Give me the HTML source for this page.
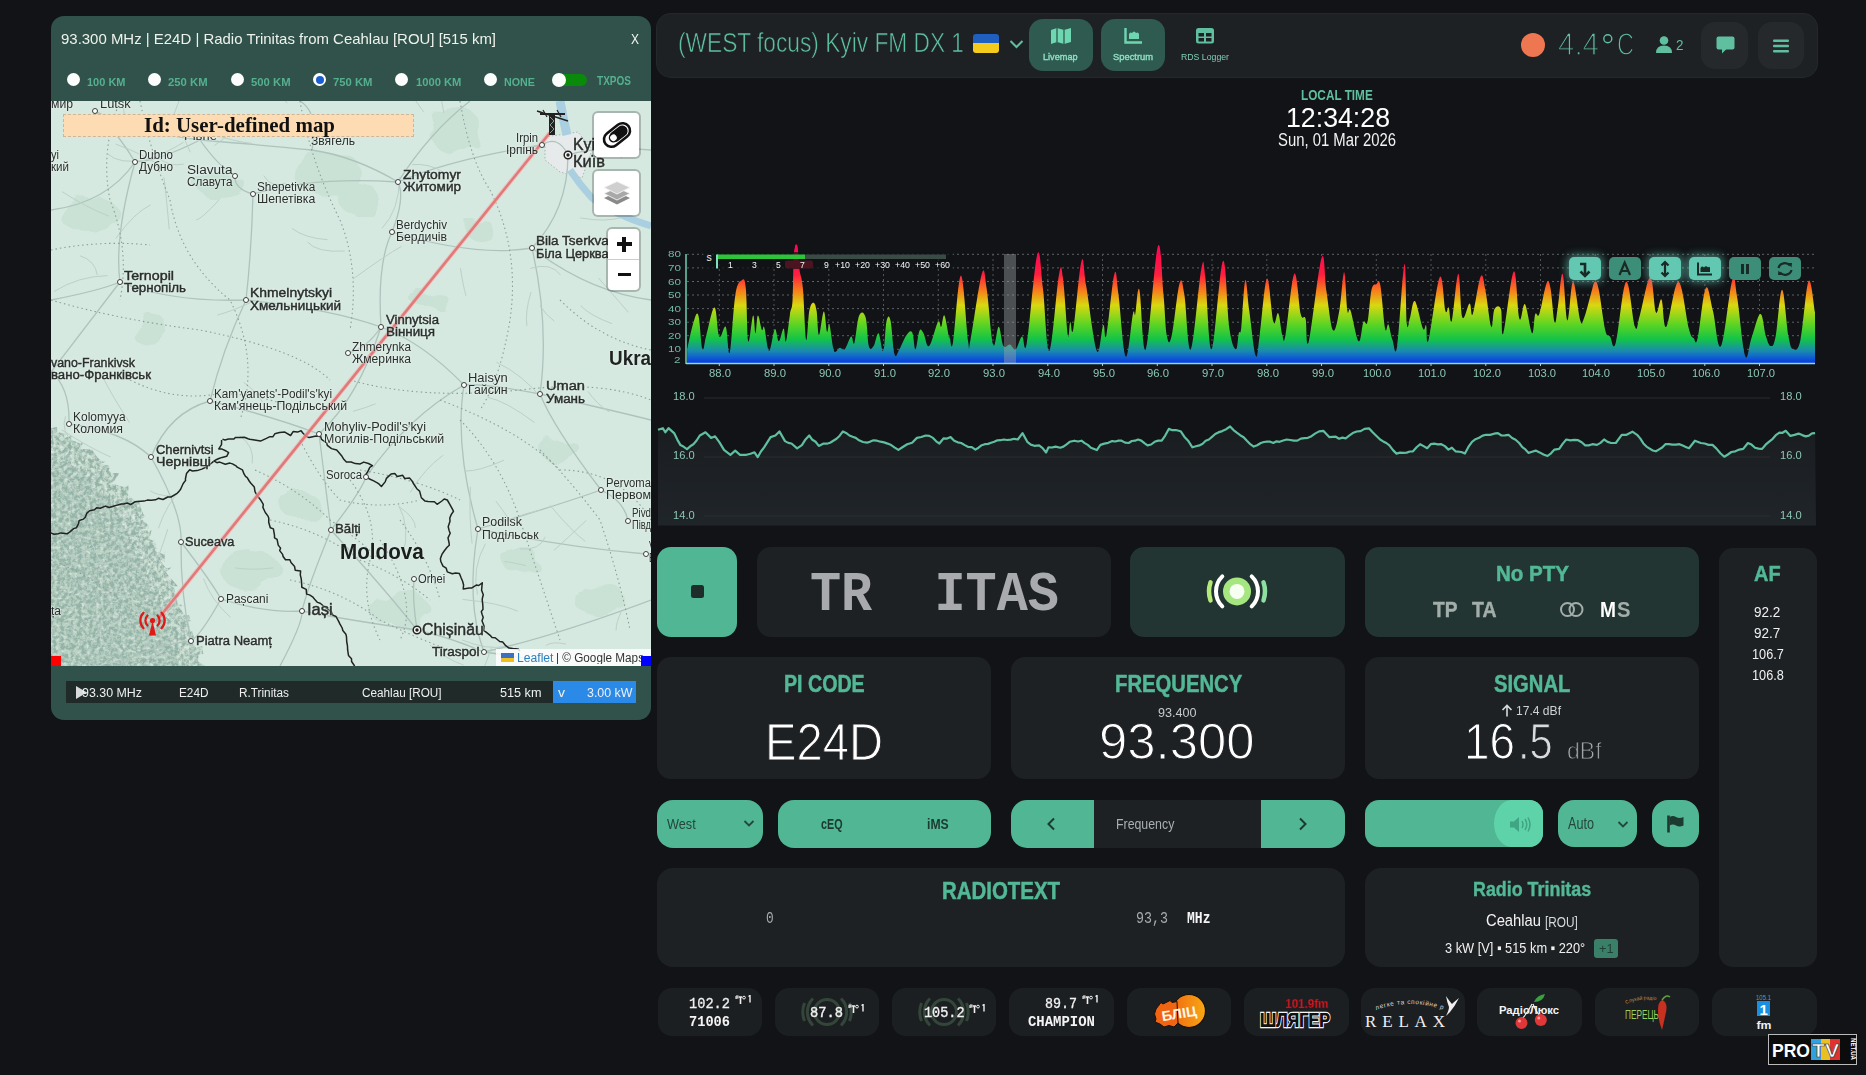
<!DOCTYPE html>
<html><head><meta charset="utf-8"><title>FM-DX Webserver</title>
<style>
html,body{margin:0;padding:0;width:1866px;height:1075px;overflow:hidden;background:#111316;}
body{position:relative;font-family:"Liberation Sans",sans-serif;}
.b{position:absolute;}
.t{position:absolute;white-space:pre;transform-origin:0 0;}
</style></head><body>
<div class="b" style="left:657.0px;top:13.5px;width:1159.5px;height:63.0px;background:#1e2124;border-radius:14px;box-shadow:0 0 0 1px #24282b;"></div>
<span id="hdr_title" class="t" style="left:677.50px;top:30.23px;font-size:26.89px;line-height:26.89px;color:#5fbf9f;font-weight:400;font-family:'Liberation Sans', sans-serif;transform:scaleX(0.8449);-webkit-text-stroke:0.60px #1e2124;">(WEST focus) Kyiv FM DX 1</span>
<div class="b" style="left:972.5px;top:33.5px;width:26.5px;height:9.7px;background:#1f5fbf;border-radius:3px 3px 0 0;"></div>
<div class="b" style="left:972.5px;top:43.2px;width:26.5px;height:9.8px;background:#f2cb1d;border-radius:0 0 3px 3px;"></div>
<svg class="b" style="left:1009px;top:39px" width="15" height="10"><path d="M1.5 2 L7.5 8 L13.5 2" stroke="#5fbf9f" stroke-width="2" fill="none"/></svg>
<div class="b" style="left:1029.0px;top:18.8px;width:64.0px;height:52.0px;background:#2e5a4f;border-radius:14px;"></div>
<div class="b" style="left:1101.0px;top:18.8px;width:64.0px;height:52.0px;background:#2e5a4f;border-radius:14px;"></div>
<svg class="b" style="left:1050px;top:28px" width="22" height="16"><path d="M1 2 L7 0 L14 2 L21 0 L21 14 L14 16 L7 14 L1 16 Z" fill="#6fd6b2"/><path d="M7 0 L7 14 M14 2 L14 16" stroke="#2e5a4f" stroke-width="1.3"/></svg>
<svg class="b" style="left:1124px;top:28px" width="19" height="16"><path d="M1.5 0 L1.5 14.5 L18 14.5" stroke="#6fd6b2" stroke-width="2.4" fill="none"/><path d="M5 11 L5 6 Q6 3.5 8 5 Q10 2 12 5 Q14 3.5 15 6 L15 11 Z" fill="#6fd6b2"/></svg>
<svg class="b" style="left:1196px;top:28px" width="18" height="16"><rect x="0" y="0" width="18" height="15.5" rx="2.5" fill="#5fbf9f"/><rect x="2.5" y="5" width="5.5" height="3.5" fill="#1e2124"/><rect x="10" y="5" width="5.5" height="3.5" fill="#1e2124"/><rect x="2.5" y="10" width="5.5" height="3.5" fill="#1e2124"/><rect x="10" y="10" width="5.5" height="3.5" fill="#1e2124"/></svg>
<span id="lbl_live" class="t" style="left:1043.30px;top:51.63px;font-size:9.88px;line-height:9.88px;color:#8fe0c4;font-weight:400;font-family:'Liberation Sans', sans-serif;transform:scaleX(0.9269);-webkit-text-stroke:0.35px #8fe0c4;">Livemap</span>
<span id="lbl_spec" class="t" style="left:1113.00px;top:51.63px;font-size:9.88px;line-height:9.88px;color:#8fe0c4;font-weight:400;font-family:'Liberation Sans', sans-serif;transform:scaleX(0.9464);-webkit-text-stroke:0.35px #8fe0c4;">Spectrum</span>
<span id="lbl_rds" class="t" style="left:1180.70px;top:51.63px;font-size:9.88px;line-height:9.88px;color:#7fcfb4;font-weight:400;font-family:'Liberation Sans', sans-serif;transform:scaleX(0.8833);">RDS Logger</span>
<div class="b" style="left:1521.2px;top:33.2px;width:24px;height:24px;border-radius:50%;background:#ee7650"></div>
<span id="temp" class="t" style="left:1557.50px;top:29.04px;font-size:31.25px;line-height:31.25px;color:#5fbf9f;font-weight:400;font-family:'Liberation Sans', sans-serif;transform:scaleX(0.9435);-webkit-text-stroke:1.30px #1e2124;">4.4</span>
<svg class="b" style="left:1602px;top:33px" width="12" height="12"><circle cx="5.8" cy="5.8" r="4" stroke="#5fbf9f" stroke-width="1.4" fill="none"/></svg>
<span id="tempc" class="t" style="left:1616.50px;top:29.04px;font-size:31.25px;line-height:31.25px;color:#5fbf9f;font-weight:400;font-family:'Liberation Sans', sans-serif;transform:scaleX(0.7529);-webkit-text-stroke:1.30px #1e2124;">C</span>
<svg class="b" style="left:1656px;top:36px" width="16" height="18"><circle cx="8" cy="4.5" r="4.3" fill="#5fbf9f"/><path d="M0 17 Q0 9.5 8 9.5 Q16 9.5 16 17 Z" fill="#5fbf9f"/></svg>
<span id="users" class="t" style="left:1675.50px;top:38.69px;font-size:13.95px;line-height:13.95px;color:#5fbf9f;font-weight:400;font-family:'Liberation Sans', sans-serif;transform:scaleX(0.9658);">2</span>
<div class="b" style="left:1701.0px;top:21.5px;width:47.4px;height:47.3px;background:#25292c;border-radius:14px;"></div>
<div class="b" style="left:1757.5px;top:21.5px;width:46.5px;height:47.3px;background:#25292c;border-radius:14px;"></div>
<svg class="b" style="left:1716px;top:36px" width="19" height="18"><rect x="0.5" y="0.5" width="18" height="13" rx="2" fill="#5fbf9f"/><path d="M6 13 L6 17.5 L10.5 13 Z" fill="#5fbf9f"/></svg>
<svg class="b" style="left:1773px;top:38.5px" width="16" height="14"><rect x="0" y="0.5" width="16" height="2.6" rx="1" fill="#5fbf9f"/><rect x="0" y="5.7" width="16" height="2.6" rx="1" fill="#5fbf9f"/><rect x="0" y="10.9" width="16" height="2.6" rx="1" fill="#5fbf9f"/></svg>
<span id="lt" class="t" style="left:1301.00px;top:87.69px;font-size:14.53px;line-height:14.53px;color:#5fbf9f;font-weight:700;font-family:'Liberation Sans', sans-serif;transform:scaleX(0.8119);">LOCAL TIME</span>
<span id="time" class="t" style="left:1285.60px;top:103.00px;font-size:28.34px;line-height:28.34px;color:#ffffff;font-weight:400;font-family:'Liberation Sans', sans-serif;transform:scaleX(0.9430);">12:34:28</span>
<span id="date" class="t" style="left:1278.00px;top:130.90px;font-size:18.90px;line-height:18.90px;color:#f2f2f2;font-weight:400;font-family:'Liberation Sans', sans-serif;transform:scaleX(0.7857);">Sun, 01 Mar 2026</span>
<svg class="b" style="left:0;top:0" width="1866" height="540">
<defs><linearGradient id="sg" x1="0" y1="254" x2="0" y2="363" gradientUnits="userSpaceOnUse"><stop offset="0" stop-color="#ff0a50"/><stop offset="0.19" stop-color="#ff1e40"/><stop offset="0.33" stop-color="#f87a1c"/><stop offset="0.47" stop-color="#d8d810"/><stop offset="0.65" stop-color="#5ad424"/><stop offset="0.78" stop-color="#14c448"/><stop offset="0.89" stop-color="#1a8ab0"/><stop offset="1" stop-color="#0838e8"/></linearGradient><linearGradient id="fillg" x1="0" y1="420" x2="0" y2="526" gradientUnits="userSpaceOnUse"><stop offset="0" stop-color="#1a1d20"/><stop offset="1" stop-color="#22272a"/></linearGradient><filter id="glow" x="-50%" y="-50%" width="200%" height="200%"><feGaussianBlur stdDeviation="3"/></filter></defs>
<line x1="687" y1="254.3" x2="1815" y2="254.3" stroke="#5e6264" stroke-width="1" stroke-dasharray="2 3"/>
<line x1="687" y1="267.9" x2="1815" y2="267.9" stroke="#5e6264" stroke-width="1" stroke-dasharray="2 3"/>
<line x1="687" y1="281.5" x2="1815" y2="281.5" stroke="#5e6264" stroke-width="1" stroke-dasharray="2 3"/>
<line x1="687" y1="295.0" x2="1815" y2="295.0" stroke="#5e6264" stroke-width="1" stroke-dasharray="2 3"/>
<line x1="687" y1="308.6" x2="1815" y2="308.6" stroke="#5e6264" stroke-width="1" stroke-dasharray="2 3"/>
<line x1="687" y1="322.2" x2="1815" y2="322.2" stroke="#5e6264" stroke-width="1" stroke-dasharray="2 3"/>
<line x1="687" y1="335.7" x2="1815" y2="335.7" stroke="#5e6264" stroke-width="1" stroke-dasharray="2 3"/>
<line x1="687" y1="349.3" x2="1815" y2="349.3" stroke="#5e6264" stroke-width="1" stroke-dasharray="2 3"/>
<line x1="719.3" y1="254" x2="719.3" y2="364" stroke="#505456" stroke-width="1" stroke-dasharray="2 3"/>
<line x1="774.0" y1="254" x2="774.0" y2="364" stroke="#505456" stroke-width="1" stroke-dasharray="2 3"/>
<line x1="828.8" y1="254" x2="828.8" y2="364" stroke="#505456" stroke-width="1" stroke-dasharray="2 3"/>
<line x1="883.5" y1="254" x2="883.5" y2="364" stroke="#505456" stroke-width="1" stroke-dasharray="2 3"/>
<line x1="938.3" y1="254" x2="938.3" y2="364" stroke="#505456" stroke-width="1" stroke-dasharray="2 3"/>
<line x1="993.0" y1="254" x2="993.0" y2="364" stroke="#505456" stroke-width="1" stroke-dasharray="2 3"/>
<line x1="1047.8" y1="254" x2="1047.8" y2="364" stroke="#505456" stroke-width="1" stroke-dasharray="2 3"/>
<line x1="1102.5" y1="254" x2="1102.5" y2="364" stroke="#505456" stroke-width="1" stroke-dasharray="2 3"/>
<line x1="1157.3" y1="254" x2="1157.3" y2="364" stroke="#505456" stroke-width="1" stroke-dasharray="2 3"/>
<line x1="1212.0" y1="254" x2="1212.0" y2="364" stroke="#505456" stroke-width="1" stroke-dasharray="2 3"/>
<line x1="1266.8" y1="254" x2="1266.8" y2="364" stroke="#505456" stroke-width="1" stroke-dasharray="2 3"/>
<line x1="1321.5" y1="254" x2="1321.5" y2="364" stroke="#505456" stroke-width="1" stroke-dasharray="2 3"/>
<line x1="1376.3" y1="254" x2="1376.3" y2="364" stroke="#505456" stroke-width="1" stroke-dasharray="2 3"/>
<line x1="1431.0" y1="254" x2="1431.0" y2="364" stroke="#505456" stroke-width="1" stroke-dasharray="2 3"/>
<line x1="1485.8" y1="254" x2="1485.8" y2="364" stroke="#505456" stroke-width="1" stroke-dasharray="2 3"/>
<line x1="1540.5" y1="254" x2="1540.5" y2="364" stroke="#505456" stroke-width="1" stroke-dasharray="2 3"/>
<line x1="1595.3" y1="254" x2="1595.3" y2="364" stroke="#505456" stroke-width="1" stroke-dasharray="2 3"/>
<line x1="1650.0" y1="254" x2="1650.0" y2="364" stroke="#505456" stroke-width="1" stroke-dasharray="2 3"/>
<line x1="1704.8" y1="254" x2="1704.8" y2="364" stroke="#505456" stroke-width="1" stroke-dasharray="2 3"/>
<line x1="1759.5" y1="254" x2="1759.5" y2="364" stroke="#505456" stroke-width="1" stroke-dasharray="2 3"/>
<path d="M687,363 L687.2,349.3 C688.3,344.3 691.5,328.2 693.6,322.0 C695.6,315.8 696.8,310.6 698.4,315.6 C700.0,320.6 701.0,345.8 702.4,349.3 C703.9,352.9 704.2,342.5 706.4,334.9 C708.7,327.2 712.1,307.2 714.5,307.5 C716.8,307.8 717.2,332.9 719.3,336.5 C721.4,340.0 723.8,323.9 725.7,326.8 C727.7,329.8 728.0,358.4 729.8,352.5 C731.5,346.6 733.2,307.9 735.4,294.7 C737.6,281.4 739.9,281.4 741.8,280.2 C743.7,279.0 744.7,277.0 745.8,288.2 C747.0,299.4 746.9,336.3 748.2,341.3 C749.6,346.3 751.7,317.0 753.1,315.6 C754.4,314.1 754.6,333.2 755.5,333.2 C756.4,333.2 756.7,316.2 757.9,315.6 C759.1,315.0 760.7,327.8 761.9,330.0 C763.1,332.2 763.0,323.8 764.3,327.6 C765.7,331.5 767.2,350.6 769.1,350.9 C771.1,351.2 773.0,331.0 774.8,329.2 C776.5,327.5 777.2,341.4 778.8,341.3 C780.4,341.1 782.3,328.4 783.6,328.4 C784.9,328.4 784.8,343.9 786.0,341.3 C787.2,338.6 788.9,321.3 790.0,314.0 C791.2,306.6 791.8,311.1 792.5,301.1 C793.1,291.1 793.1,269.2 793.6,259.3 C794.0,249.4 794.4,249.9 794.9,247.2 C795.3,244.5 795.6,244.4 796.2,244.5 C796.7,244.6 797.2,243.6 797.8,248.0 C798.4,252.5 798.4,261.6 799.4,268.9 C800.3,276.3 801.7,275.3 802.9,288.2 C804.1,301.2 804.9,335.6 806.1,339.7 C807.3,343.8 808.0,317.5 809.3,310.7 C810.7,304.0 812.0,302.7 813.4,302.7 C814.7,302.7 815.5,304.8 816.6,310.7 C817.6,316.6 817.7,334.7 819.0,334.9 C820.3,335.0 822.3,312.1 823.8,311.5 C825.3,311.0 826.0,329.3 827.0,331.6 C828.1,334.0 828.3,321.2 829.4,324.4 C830.6,327.6 832.1,344.5 833.5,349.3 C834.8,354.2 835.5,351.2 836.7,350.9 C837.9,350.6 838.4,348.0 839.9,347.7 C841.4,347.4 842.6,351.4 844.7,349.3 C846.8,347.3 849.4,337.6 851.1,336.5 C852.9,335.3 852.9,346.7 854.4,342.9 C855.8,339.1 857.1,320.3 859.2,315.6 C861.2,310.8 863.8,311.6 865.6,317.2 C867.4,322.8 867.4,340.8 868.8,346.1 C870.3,351.4 871.9,348.5 873.6,346.1 C875.4,343.8 876.7,332.4 878.5,333.2 C880.2,334.1 881.8,353.1 883.3,350.9 C884.8,348.7 885.2,326.8 886.5,321.2 C887.8,315.6 889.1,314.3 890.5,320.4 C892.0,326.4 892.9,348.8 894.5,354.1 C896.2,359.5 897.2,352.9 899.4,349.3 C901.6,345.8 904.2,338.0 906.6,334.9 C909.0,331.8 910.6,329.8 912.2,332.4 C913.9,335.1 914.1,349.6 915.5,349.3 C916.8,349.0 918.0,333.8 919.5,330.8 C920.9,327.9 921.7,330.4 923.5,333.2 C925.3,336.0 926.5,348.2 929.1,346.1 C931.8,344.0 935.7,325.5 938.0,322.0 C940.2,318.5 940.0,328.0 941.2,326.8 C942.4,325.6 942.9,313.5 944.4,315.6 C945.9,317.6 948.2,334.5 949.2,338.1 C950.2,341.6 949.0,334.0 949.6,334.9 C950.3,335.7 950.8,353.8 952.9,342.9 C954.9,332.0 958.1,275.7 960.9,275.4 C963.7,275.1 966.4,329.5 968.1,341.3 C969.9,353.1 968.0,352.1 970.5,339.7 C973.1,327.3 978.9,283.2 981.8,273.8 C984.7,264.3 984.6,275.3 986.6,288.2 C988.7,301.2 990.8,337.4 993.1,344.5 C995.3,351.6 996.8,326.5 998.7,326.8 C1000.6,327.1 1001.4,342.9 1003.5,346.1 C1005.6,349.4 1007.7,343.9 1009.9,344.5 C1012.1,345.1 1013.4,350.8 1015.6,349.3 C1017.8,347.9 1019.9,337.6 1022.0,336.5 C1024.1,335.3 1024.0,357.9 1026.8,342.9 C1029.6,327.9 1034.3,264.5 1037.3,254.5 C1040.2,244.4 1040.7,270.5 1042.9,288.2 C1045.1,305.9 1046.4,353.4 1049.3,350.9 C1052.3,348.4 1056.5,287.8 1059.0,274.6 C1061.5,261.3 1061.4,267.5 1063.0,278.6 C1064.6,289.6 1066.5,326.9 1067.8,334.9 C1069.1,342.8 1069.2,323.2 1070.2,322.0 C1071.3,320.8 1071.4,339.6 1073.4,328.4 C1075.5,317.2 1079.1,268.6 1081.5,260.9 C1083.8,253.2 1083.5,270.1 1086.3,286.6 C1089.1,303.1 1093.7,343.9 1096.8,350.9 C1099.8,358.0 1101.4,328.2 1103.2,325.2 C1105.0,322.3 1104.3,344.3 1106.4,334.9 C1108.5,325.4 1112.2,281.1 1114.4,273.8 C1116.6,266.4 1116.4,279.5 1118.5,294.7 C1120.5,309.8 1123.0,353.0 1125.7,356.6 C1128.3,360.1 1131.2,321.8 1132.9,314.0 C1134.7,306.1 1134.2,318.4 1135.3,314.0 C1136.5,309.5 1137.4,283.4 1139.4,289.8 C1141.3,296.3 1142.4,357.3 1145.8,349.3 C1149.2,341.4 1154.6,256.5 1157.8,246.4 C1161.1,236.4 1161.9,278.5 1163.5,294.7 C1165.1,310.9 1165.2,327.2 1166.7,334.9 C1168.2,342.5 1169.2,345.9 1171.5,336.5 C1173.9,327.0 1177.2,291.1 1179.5,283.4 C1181.9,275.7 1182.3,282.6 1184.4,294.7 C1186.4,306.7 1187.7,354.0 1190.8,349.3 C1193.9,344.6 1198.6,282.2 1201.3,268.9 C1203.9,255.7 1203.4,262.2 1205.3,277.0 C1207.2,291.7 1208.5,352.3 1211.7,349.3 C1214.9,346.4 1219.7,264.7 1223.0,260.9 C1226.2,257.1 1227.0,312.2 1229.4,328.4 C1231.7,344.6 1234.1,348.4 1235.8,349.3 C1237.6,350.2 1237.8,337.2 1238.8,333.2 C1239.8,329.3 1240.1,337.3 1241.3,327.6 C1242.4,317.9 1243.8,283.3 1245.3,280.2 C1246.7,277.1 1247.4,296.9 1249.3,310.7 C1251.2,324.6 1253.8,351.3 1255.7,355.8 C1257.6,360.2 1257.7,349.0 1259.7,334.9 C1261.8,320.7 1264.5,280.9 1267.0,278.6 C1269.5,276.2 1271.3,315.7 1273.4,322.0 C1275.5,328.3 1276.6,310.8 1278.2,313.2 C1279.9,315.5 1280.9,330.9 1282.3,334.9 C1283.6,338.8 1283.3,346.1 1285.5,334.9 C1287.7,323.7 1291.5,277.6 1294.3,273.8 C1297.1,269.9 1298.7,305.7 1300.7,314.0 C1302.8,322.2 1304.1,313.8 1305.6,318.8 C1307.0,323.8 1305.8,352.5 1308.8,341.3 C1311.7,330.1 1318.4,266.8 1321.6,257.7 C1324.9,248.5 1324.4,278.2 1326.5,291.4 C1328.5,304.7 1330.5,326.5 1332.9,330.0 C1335.3,333.6 1337.3,321.4 1339.3,310.7 C1341.4,300.1 1342.7,272.2 1344.1,272.2 C1345.6,272.2 1346.2,303.7 1347.4,310.7 C1348.5,317.8 1348.5,305.1 1350.6,310.7 C1352.6,316.3 1356.3,339.2 1358.6,341.3 C1361.0,343.3 1361.8,325.5 1363.4,322.0 C1365.1,318.5 1366.0,327.9 1367.5,322.0 C1368.9,316.1 1369.9,296.8 1371.5,289.8 C1373.1,282.9 1374.7,285.1 1376.3,284.2 C1377.9,283.3 1378.7,276.9 1380.3,285.0 C1381.9,293.1 1383.7,321.2 1385.1,328.4 C1386.6,335.6 1387.0,322.3 1388.4,324.4 C1389.7,326.5 1390.8,335.7 1392.4,339.7 C1394.0,343.7 1395.0,360.0 1397.2,346.1 C1399.4,332.3 1402.7,268.2 1404.4,264.1 C1406.2,260.0 1405.8,313.9 1406.8,323.6 C1407.9,333.3 1408.6,321.3 1410.1,317.2 C1411.5,313.0 1412.5,299.0 1414.9,301.1 C1417.2,303.2 1420.9,324.0 1422.9,328.4 C1425.0,332.8 1425.1,323.1 1426.1,325.2 C1427.2,327.3 1426.0,348.5 1428.6,339.7 C1431.1,330.8 1436.7,282.3 1439.8,277.0 C1442.9,271.7 1443.8,305.1 1445.4,310.7 C1447.1,316.3 1447.5,305.8 1448.6,307.5 C1449.8,309.3 1450.1,326.6 1451.9,320.4 C1453.6,314.2 1456.4,274.4 1458.3,273.8 C1460.2,273.2 1460.3,311.7 1462.3,317.2 C1464.4,322.6 1467.6,304.1 1469.5,303.5 C1471.5,302.9 1470.7,319.0 1472.8,314.0 C1474.8,308.9 1478.4,280.3 1480.8,276.2 C1483.2,272.0 1483.7,282.2 1485.6,291.4 C1487.5,300.7 1489.6,323.6 1491.3,326.8 C1492.9,330.1 1492.7,312.4 1494.5,309.1 C1496.2,305.9 1499.3,304.7 1500.9,309.1 C1502.5,313.6 1501.0,340.2 1503.3,333.2 C1505.7,326.3 1510.8,274.0 1513.8,271.4 C1516.7,268.7 1517.3,312.7 1519.4,318.8 C1521.5,324.8 1522.7,301.7 1525.0,304.3 C1527.3,307.0 1530.2,331.5 1532.1,333.2 C1533.9,335.0 1533.9,317.5 1535.3,314.0 C1536.6,310.4 1537.2,319.6 1539.3,314.0 C1541.4,308.4 1544.5,288.1 1546.5,283.4 C1548.6,278.7 1549.1,281.2 1550.5,288.2 C1552.0,295.3 1553.2,318.5 1554.6,322.0 C1555.9,325.5 1556.3,316.4 1557.8,307.5 C1559.3,298.7 1560.8,271.4 1562.6,273.8 C1564.4,276.1 1565.5,318.9 1567.4,320.4 C1569.3,321.9 1570.7,281.8 1573.1,281.8 C1575.4,281.8 1578.2,313.9 1580.3,320.4 C1582.4,326.9 1582.4,321.9 1584.3,317.2 C1586.2,312.5 1588.8,301.1 1590.7,294.7 C1592.7,288.2 1593.3,282.7 1594.8,281.8 C1596.2,280.9 1596.9,281.0 1598.8,289.8 C1600.7,298.7 1603.1,321.5 1605.2,330.0 C1607.3,338.6 1608.1,334.1 1610.0,336.5 C1611.9,338.8 1612.7,352.9 1615.7,342.9 C1618.6,332.9 1622.6,284.7 1626.1,281.8 C1629.6,278.9 1632.4,320.6 1635.0,326.8 C1637.5,333.0 1637.0,324.7 1639.8,315.6 C1642.6,306.4 1647.3,277.6 1650.2,277.0 C1653.2,276.4 1653.8,308.2 1655.9,312.3 C1657.9,316.5 1659.6,296.8 1661.5,299.5 C1663.4,302.1 1663.2,330.1 1666.3,326.8 C1669.4,323.6 1674.2,281.5 1678.4,281.8 C1682.5,282.1 1686.0,318.1 1688.8,328.4 C1691.6,338.7 1692.0,336.3 1693.6,338.1 C1695.3,339.8 1695.4,347.2 1697.7,338.1 C1699.9,328.9 1702.9,293.2 1705.7,288.2 C1708.5,283.2 1710.1,300.1 1712.9,310.7 C1715.7,321.4 1717.4,351.7 1721.0,346.1 C1724.5,340.5 1729.3,289.3 1732.2,280.2 C1735.2,271.1 1734.7,282.4 1737.0,296.3 C1739.4,310.1 1742.4,348.1 1745.1,355.8 C1747.7,363.4 1748.7,345.7 1751.5,338.1 C1754.3,330.4 1757.7,314.2 1760.4,314.0 C1763.0,313.7 1764.1,330.6 1766.0,336.5 C1767.9,342.4 1769.0,346.1 1770.8,346.1 C1772.6,346.1 1773.6,346.8 1775.6,336.5 C1777.7,326.1 1779.7,289.8 1782.1,289.8 C1784.4,289.8 1786.4,325.6 1788.5,336.5 C1790.6,347.4 1791.1,348.7 1793.3,349.3 C1795.5,349.9 1797.7,352.2 1800.5,339.7 C1803.3,327.2 1805.9,286.0 1808.6,281.0 C1811.2,276.0 1813.8,306.6 1815.0,312.3 L1815,363 Z" fill="url(#sg)"/>
<rect x="1004" y="254" width="12" height="109" fill="#a0a4a8" fill-opacity="0.42"/>
<line x1="686" y1="254" x2="686" y2="364" stroke="#6fcfb0" stroke-width="1.5"/>
<line x1="686" y1="363.5" x2="1815" y2="363.5" stroke="#7fe0e8" stroke-width="1.6"/>
<line x1="719.3" y1="363" x2="719.3" y2="366" stroke="#9fd8d0" stroke-width="1"/>
<line x1="774.0" y1="363" x2="774.0" y2="366" stroke="#9fd8d0" stroke-width="1"/>
<line x1="828.8" y1="363" x2="828.8" y2="366" stroke="#9fd8d0" stroke-width="1"/>
<line x1="883.5" y1="363" x2="883.5" y2="366" stroke="#9fd8d0" stroke-width="1"/>
<line x1="938.3" y1="363" x2="938.3" y2="366" stroke="#9fd8d0" stroke-width="1"/>
<line x1="993.0" y1="363" x2="993.0" y2="366" stroke="#9fd8d0" stroke-width="1"/>
<line x1="1047.8" y1="363" x2="1047.8" y2="366" stroke="#9fd8d0" stroke-width="1"/>
<line x1="1102.5" y1="363" x2="1102.5" y2="366" stroke="#9fd8d0" stroke-width="1"/>
<line x1="1157.3" y1="363" x2="1157.3" y2="366" stroke="#9fd8d0" stroke-width="1"/>
<line x1="1212.0" y1="363" x2="1212.0" y2="366" stroke="#9fd8d0" stroke-width="1"/>
<line x1="1266.8" y1="363" x2="1266.8" y2="366" stroke="#9fd8d0" stroke-width="1"/>
<line x1="1321.5" y1="363" x2="1321.5" y2="366" stroke="#9fd8d0" stroke-width="1"/>
<line x1="1376.3" y1="363" x2="1376.3" y2="366" stroke="#9fd8d0" stroke-width="1"/>
<line x1="1431.0" y1="363" x2="1431.0" y2="366" stroke="#9fd8d0" stroke-width="1"/>
<line x1="1485.8" y1="363" x2="1485.8" y2="366" stroke="#9fd8d0" stroke-width="1"/>
<line x1="1540.5" y1="363" x2="1540.5" y2="366" stroke="#9fd8d0" stroke-width="1"/>
<line x1="1595.3" y1="363" x2="1595.3" y2="366" stroke="#9fd8d0" stroke-width="1"/>
<line x1="1650.0" y1="363" x2="1650.0" y2="366" stroke="#9fd8d0" stroke-width="1"/>
<line x1="1704.8" y1="363" x2="1704.8" y2="366" stroke="#9fd8d0" stroke-width="1"/>
<line x1="1759.5" y1="363" x2="1759.5" y2="366" stroke="#9fd8d0" stroke-width="1"/>
<rect x="703" y="252" width="250" height="17" fill="#111316" fill-opacity="0.72"/>
<rect x="785" y="260.5" width="28" height="8" fill="#4a1420" rx="2"/>
<rect x="717" y="254.5" width="88" height="4.5" fill="#2ec43a"/>
<rect x="805" y="254.5" width="141" height="4.5" fill="#3a4a44"/>
<rect x="716" y="254.5" width="2" height="14" fill="#7fe0c0"/>
</svg>
<span id="smeter_s" class="t" style="left:706.50px;top:251.61px;font-size:10.50px;line-height:10.50px;color:#f0f0f0;font-weight:400;font-family:'Liberation Sans', sans-serif;">s</span>
<span id="sm0" class="t" style="left:727.50px;top:259.75px;font-size:9.74px;line-height:9.74px;color:#f4f4f4;font-weight:400;font-family:'Liberation Sans', sans-serif;transform:scaleX(0.8853);">1</span>
<span id="sm1" class="t" style="left:751.50px;top:259.75px;font-size:9.74px;line-height:9.74px;color:#f4f4f4;font-weight:400;font-family:'Liberation Sans', sans-serif;transform:scaleX(0.8853);">3</span>
<span id="sm2" class="t" style="left:775.50px;top:259.75px;font-size:9.74px;line-height:9.74px;color:#f4f4f4;font-weight:400;font-family:'Liberation Sans', sans-serif;transform:scaleX(0.8853);">5</span>
<span id="sm3" class="t" style="left:799.50px;top:259.75px;font-size:9.74px;line-height:9.74px;color:#f4f4f4;font-weight:400;font-family:'Liberation Sans', sans-serif;transform:scaleX(0.8853);">7</span>
<span id="sm4" class="t" style="left:823.50px;top:259.75px;font-size:9.74px;line-height:9.74px;color:#f4f4f4;font-weight:400;font-family:'Liberation Sans', sans-serif;transform:scaleX(0.8853);">9</span>
<span id="sm5" class="t" style="left:835.00px;top:259.75px;font-size:9.74px;line-height:9.74px;color:#f4f4f4;font-weight:400;font-family:'Liberation Sans', sans-serif;transform:scaleX(0.9082);">+10</span>
<span id="sm6" class="t" style="left:855.00px;top:259.75px;font-size:9.74px;line-height:9.74px;color:#f4f4f4;font-weight:400;font-family:'Liberation Sans', sans-serif;transform:scaleX(0.9082);">+20</span>
<span id="sm7" class="t" style="left:875.00px;top:259.75px;font-size:9.74px;line-height:9.74px;color:#f4f4f4;font-weight:400;font-family:'Liberation Sans', sans-serif;transform:scaleX(0.9082);">+30</span>
<span id="sm8" class="t" style="left:895.00px;top:259.75px;font-size:9.74px;line-height:9.74px;color:#f4f4f4;font-weight:400;font-family:'Liberation Sans', sans-serif;transform:scaleX(0.9082);">+40</span>
<span id="sm9" class="t" style="left:915.00px;top:259.75px;font-size:9.74px;line-height:9.74px;color:#f4f4f4;font-weight:400;font-family:'Liberation Sans', sans-serif;transform:scaleX(0.9082);">+50</span>
<span id="sm10" class="t" style="left:935.00px;top:259.75px;font-size:9.74px;line-height:9.74px;color:#f4f4f4;font-weight:400;font-family:'Liberation Sans', sans-serif;transform:scaleX(0.9082);">+60</span>
<span id="yl80" class="t" style="left:667.50px;top:249.44px;font-size:9.88px;line-height:9.88px;color:#72b9a2;font-weight:400;font-family:'Liberation Sans', sans-serif;transform:scaleX(1.1835);">80</span>
<span id="yl70" class="t" style="left:667.50px;top:263.01px;font-size:9.88px;line-height:9.88px;color:#72b9a2;font-weight:400;font-family:'Liberation Sans', sans-serif;transform:scaleX(1.1835);">70</span>
<span id="yl60" class="t" style="left:667.50px;top:276.58px;font-size:9.88px;line-height:9.88px;color:#72b9a2;font-weight:400;font-family:'Liberation Sans', sans-serif;transform:scaleX(1.1835);">60</span>
<span id="yl50" class="t" style="left:667.50px;top:290.15px;font-size:9.88px;line-height:9.88px;color:#72b9a2;font-weight:400;font-family:'Liberation Sans', sans-serif;transform:scaleX(1.1835);">50</span>
<span id="yl40" class="t" style="left:667.50px;top:303.72px;font-size:9.88px;line-height:9.88px;color:#72b9a2;font-weight:400;font-family:'Liberation Sans', sans-serif;transform:scaleX(1.1835);">40</span>
<span id="yl30" class="t" style="left:667.50px;top:317.29px;font-size:9.88px;line-height:9.88px;color:#72b9a2;font-weight:400;font-family:'Liberation Sans', sans-serif;transform:scaleX(1.1835);">30</span>
<span id="yl20" class="t" style="left:667.50px;top:330.86px;font-size:9.88px;line-height:9.88px;color:#72b9a2;font-weight:400;font-family:'Liberation Sans', sans-serif;transform:scaleX(1.1835);">20</span>
<span id="yl10" class="t" style="left:667.50px;top:344.43px;font-size:9.88px;line-height:9.88px;color:#72b9a2;font-weight:400;font-family:'Liberation Sans', sans-serif;transform:scaleX(1.1835);">10</span>
<span id="yl2" class="t" style="left:674.00px;top:355.13px;font-size:9.88px;line-height:9.88px;color:#72b9a2;font-weight:400;font-family:'Liberation Sans', sans-serif;transform:scaleX(1.1818);">2</span>
<span id="xl88" class="t" style="left:709.30px;top:368.94px;font-size:10.47px;line-height:10.47px;color:#8cc7b3;font-weight:400;font-family:'Liberation Sans', sans-serif;transform:scaleX(1.0789);">88.0</span>
<span id="xl89" class="t" style="left:764.05px;top:368.94px;font-size:10.47px;line-height:10.47px;color:#8cc7b3;font-weight:400;font-family:'Liberation Sans', sans-serif;transform:scaleX(1.0789);">89.0</span>
<span id="xl90" class="t" style="left:818.80px;top:368.94px;font-size:10.47px;line-height:10.47px;color:#8cc7b3;font-weight:400;font-family:'Liberation Sans', sans-serif;transform:scaleX(1.0789);">90.0</span>
<span id="xl91" class="t" style="left:873.55px;top:368.94px;font-size:10.47px;line-height:10.47px;color:#8cc7b3;font-weight:400;font-family:'Liberation Sans', sans-serif;transform:scaleX(1.0789);">91.0</span>
<span id="xl92" class="t" style="left:928.30px;top:368.94px;font-size:10.47px;line-height:10.47px;color:#8cc7b3;font-weight:400;font-family:'Liberation Sans', sans-serif;transform:scaleX(1.0789);">92.0</span>
<span id="xl93" class="t" style="left:983.05px;top:368.94px;font-size:10.47px;line-height:10.47px;color:#8cc7b3;font-weight:400;font-family:'Liberation Sans', sans-serif;transform:scaleX(1.0789);">93.0</span>
<span id="xl94" class="t" style="left:1037.80px;top:368.94px;font-size:10.47px;line-height:10.47px;color:#8cc7b3;font-weight:400;font-family:'Liberation Sans', sans-serif;transform:scaleX(1.0789);">94.0</span>
<span id="xl95" class="t" style="left:1092.55px;top:368.94px;font-size:10.47px;line-height:10.47px;color:#8cc7b3;font-weight:400;font-family:'Liberation Sans', sans-serif;transform:scaleX(1.0789);">95.0</span>
<span id="xl96" class="t" style="left:1147.30px;top:368.94px;font-size:10.47px;line-height:10.47px;color:#8cc7b3;font-weight:400;font-family:'Liberation Sans', sans-serif;transform:scaleX(1.0789);">96.0</span>
<span id="xl97" class="t" style="left:1202.05px;top:368.94px;font-size:10.47px;line-height:10.47px;color:#8cc7b3;font-weight:400;font-family:'Liberation Sans', sans-serif;transform:scaleX(1.0789);">97.0</span>
<span id="xl98" class="t" style="left:1256.80px;top:368.94px;font-size:10.47px;line-height:10.47px;color:#8cc7b3;font-weight:400;font-family:'Liberation Sans', sans-serif;transform:scaleX(1.0789);">98.0</span>
<span id="xl99" class="t" style="left:1311.55px;top:368.94px;font-size:10.47px;line-height:10.47px;color:#8cc7b3;font-weight:400;font-family:'Liberation Sans', sans-serif;transform:scaleX(1.0789);">99.0</span>
<span id="xl100" class="t" style="left:1363.30px;top:368.94px;font-size:10.47px;line-height:10.47px;color:#8cc7b3;font-weight:400;font-family:'Liberation Sans', sans-serif;transform:scaleX(1.0686);">100.0</span>
<span id="xl101" class="t" style="left:1418.05px;top:368.94px;font-size:10.47px;line-height:10.47px;color:#8cc7b3;font-weight:400;font-family:'Liberation Sans', sans-serif;transform:scaleX(1.0686);">101.0</span>
<span id="xl102" class="t" style="left:1472.80px;top:368.94px;font-size:10.47px;line-height:10.47px;color:#8cc7b3;font-weight:400;font-family:'Liberation Sans', sans-serif;transform:scaleX(1.0686);">102.0</span>
<span id="xl103" class="t" style="left:1527.55px;top:368.94px;font-size:10.47px;line-height:10.47px;color:#8cc7b3;font-weight:400;font-family:'Liberation Sans', sans-serif;transform:scaleX(1.0686);">103.0</span>
<span id="xl104" class="t" style="left:1582.30px;top:368.94px;font-size:10.47px;line-height:10.47px;color:#8cc7b3;font-weight:400;font-family:'Liberation Sans', sans-serif;transform:scaleX(1.0686);">104.0</span>
<span id="xl105" class="t" style="left:1637.05px;top:368.94px;font-size:10.47px;line-height:10.47px;color:#8cc7b3;font-weight:400;font-family:'Liberation Sans', sans-serif;transform:scaleX(1.0686);">105.0</span>
<span id="xl106" class="t" style="left:1691.80px;top:368.94px;font-size:10.47px;line-height:10.47px;color:#8cc7b3;font-weight:400;font-family:'Liberation Sans', sans-serif;transform:scaleX(1.0686);">106.0</span>
<span id="xl107" class="t" style="left:1746.55px;top:368.94px;font-size:10.47px;line-height:10.47px;color:#8cc7b3;font-weight:400;font-family:'Liberation Sans', sans-serif;transform:scaleX(1.0686);">107.0</span>
<div class="b" style="left:1569.0px;top:257.3px;width:31.5px;height:23.0px;background:#62c8b2;border-radius:5px;box-shadow:0 0 8px 2px rgba(110,220,200,0.55);"></div>
<div class="b" style="left:1609.0px;top:257.3px;width:31.5px;height:23.0px;background:#3d8e78;border-radius:5px;"></div>
<div class="b" style="left:1649.0px;top:257.3px;width:31.5px;height:23.0px;background:#62c8b2;border-radius:5px;box-shadow:0 0 8px 2px rgba(110,220,200,0.55);"></div>
<div class="b" style="left:1689.0px;top:257.3px;width:31.5px;height:23.0px;background:#62c8b2;border-radius:5px;box-shadow:0 0 8px 2px rgba(110,220,200,0.55);"></div>
<div class="b" style="left:1729.0px;top:257.3px;width:31.5px;height:23.0px;background:#3d8e78;border-radius:5px;"></div>
<div class="b" style="left:1769.0px;top:257.3px;width:31.5px;height:23.0px;background:#3d8e78;border-radius:5px;"></div>
<svg class="b" style="left:1569px;top:257px" width="32" height="24"><path d="M11 7 L16 7 L16 17" stroke="#1a2a26" stroke-width="2.6" fill="none"/><path d="M11.5 14.5 L16 19 L20.5 14.5" stroke="#1a2a26" stroke-width="2.6" fill="none"/></svg>
<svg class="b" style="left:1609px;top:257px" width="32" height="24"><path d="M10.5 18 L15.7 5.5 L21 18 M12.5 14 L19 14" stroke="#1a2a26" stroke-width="2.2" fill="none"/></svg>
<svg class="b" style="left:1649px;top:257px" width="32" height="24"><path d="M16 5 L16 19 M12.5 8.5 L16 5 L19.5 8.5 M12.5 15.5 L16 19 L19.5 15.5" stroke="#1a2a26" stroke-width="2.2" fill="none"/></svg>
<svg class="b" style="left:1689px;top:257px" width="32" height="24"><path d="M9 5.5 L9 17.5 L23 17.5" stroke="#1a2a26" stroke-width="2" fill="none"/><path d="M11.5 15 L11.5 11 Q13 8.5 15 10.5 Q17 8 19 10.5 Q20.5 9 21 11 L21 15 Z" fill="#1a2a26"/></svg>
<svg class="b" style="left:1729px;top:257px" width="32" height="24"><rect x="12" y="7" width="3" height="10" fill="#1a2a26"/><rect x="17" y="7" width="3" height="10" fill="#1a2a26"/></svg>
<svg class="b" style="left:1769px;top:257px" width="32" height="24"><path d="M9.5 11 A6.5 6 0 0 1 21 8.5 M22.5 13 A6.5 6 0 0 1 11 15.5" stroke="#1a2a26" stroke-width="2.2" fill="none"/><path d="M19 6 L23 6 L22.5 10.5 Z M13 18 L9 18 L9.5 13.5 Z" fill="#1a2a26"/></svg>
<svg class="b" style="left:0;top:0" width="1866" height="540">
<defs><linearGradient id="fg2" x1="0" y1="425" x2="0" y2="526" gradientUnits="userSpaceOnUse"><stop offset="0" stop-color="#1a1d20"/><stop offset="1" stop-color="#20252a"/></linearGradient></defs>
<path d="M658,525.5 L658.0,429.8 L662.9,428.2 L665.3,432.3 L668.5,428.2 L674.1,433.1 L677.3,439.6 L680.5,445.1 L683.8,446.8 L687.0,449.1 L690.2,446.3 L693.4,444.3 L696.6,440.5 L699.8,435.5 L705.5,432.3 L711.1,437.9 L715.1,436.3 L719.5,442.4 L724.0,449.9 L727.2,452.3 L730.4,454.8 L735.2,450.7 L740.0,454.8 L743.2,454.9 L746.5,454.8 L750.5,453.8 L754.5,452.3 L757.7,457.2 L760.9,451.5 L764.1,447.4 L767.4,442.1 L770.6,437.1 L775.4,435.5 L779.4,431.4 L785.0,441.1 L788.3,442.9 L791.5,443.5 L797.1,448.3 L801.9,445.1 L805.5,439.4 L809.2,435.5 L812.4,439.8 L815.6,441.8 L818.8,445.9 L823.6,443.5 L826.8,443.7 L830.1,442.7 L833.3,440.7 L836.5,438.7 L839.7,435.7 L842.9,431.4 L846.1,432.9 L849.4,435.5 L852.6,436.8 L855.8,437.9 L859.0,440.3 L863.0,442.0 L867.0,442.7 L870.3,441.6 L873.5,440.3 L877.0,440.7 L880.5,441.7 L884.1,442.4 L887.6,443.6 L891.2,445.1 L894.8,447.6 L898.4,449.9 L902.8,447.0 L907.2,444.3 L912.1,442.7 L916.9,437.9 L921.3,437.0 L925.7,435.5 L929.3,435.9 L933.0,437.9 L936.2,441.3 L939.4,443.5 L942.6,439.5 L943.5,438.3 L947.1,438.6 L950.6,437.1 L954.2,440.7 L957.7,442.3 L961.2,443.0 L964.8,445.1 L968.3,447.0 L971.8,447.2 L975.4,449.6 L978.5,447.7 L981.7,445.2 L984.8,444.2 L988.0,443.9 L991.1,442.7 L994.2,441.8 L997.4,440.3 L1000.5,440.2 L1003.7,439.5 L1007.2,440.0 L1010.8,439.6 L1014.3,438.8 L1017.8,439.5 L1022.5,433.1 L1027.3,441.8 L1030.8,444.6 L1034.3,445.8 L1039.1,445.4 L1042.6,448.1 L1046.1,452.5 L1048.5,447.3 L1052.0,447.5 L1055.6,446.6 L1060.3,447.7 L1063.4,446.6 L1066.6,444.3 L1069.7,441.8 L1074.4,440.7 L1078.0,441.5 L1081.5,440.7 L1084.7,443.1 L1087.8,444.9 L1090.9,447.7 L1096.8,450.1 L1100.4,444.9 L1104.3,443.6 L1108.2,442.8 L1112.2,441.1 L1115.3,441.5 L1118.5,440.6 L1121.6,440.7 L1125.1,442.6 L1128.7,443.0 L1131.8,441.0 L1135.0,440.7 L1138.1,439.5 L1141.3,440.6 L1144.4,443.2 L1147.5,445.4 L1151.1,444.5 L1154.6,441.8 L1158.2,440.6 L1161.7,440.7 L1165.2,435.6 L1168.8,428.9 L1172.3,430.2 L1175.8,430.0 L1180.6,431.2 L1184.5,436.9 L1188.4,441.1 L1192.4,447.3 L1195.9,446.3 L1199.4,445.4 L1202.6,443.8 L1205.7,440.7 L1208.9,439.5 L1212.0,436.8 L1215.2,434.0 L1218.3,432.4 L1222.2,431.1 L1226.2,429.2 L1230.1,426.5 L1233.5,430.1 L1236.8,432.7 L1240.2,435.2 L1243.6,437.2 L1246.9,440.8 L1250.3,444.2 L1253.7,446.6 L1257.2,445.2 L1260.8,443.0 L1263.9,442.0 L1267.0,441.7 L1270.2,441.7 L1273.3,443.0 L1276.5,441.3 L1279.6,441.8 L1283.2,440.5 L1286.7,439.5 L1290.2,440.0 L1293.8,440.7 L1297.3,440.6 L1300.8,438.6 L1304.4,438.1 L1307.9,437.8 L1311.5,436.2 L1315.0,433.6 L1319.1,431.4 L1323.3,430.8 L1329.2,437.1 L1332.5,436.8 L1335.8,436.7 L1339.1,438.7 L1342.4,437.6 L1345.7,438.3 L1349.2,435.7 L1352.7,433.1 L1356.7,431.5 L1360.6,431.1 L1364.5,428.9 L1369.2,428.4 L1372.9,432.5 L1376.5,436.0 L1380.1,439.5 L1383.2,441.4 L1386.3,443.0 L1389.4,445.4 L1393.0,450.1 L1396.5,453.6 L1400.0,452.6 L1403.6,452.9 L1406.7,452.6 L1409.9,451.5 L1413.0,451.3 L1416.6,447.3 L1420.1,444.2 L1423.6,446.1 L1427.2,448.2 L1430.7,444.2 L1434.2,443.6 L1437.8,444.4 L1441.3,444.2 L1444.9,446.1 L1448.4,449.6 L1451.9,447.7 L1455.5,451.3 L1461.4,452.0 L1464.9,453.6 L1468.4,446.9 L1472.0,441.8 L1475.5,439.2 L1479.1,437.8 L1482.6,435.6 L1486.1,434.8 L1490.1,434.9 L1494.0,433.7 L1497.9,433.1 L1501.5,435.5 L1505.0,435.4 L1508.5,434.8 L1512.1,438.0 L1515.6,439.7 L1519.2,443.0 L1522.3,447.1 L1525.4,449.4 L1528.6,452.9 L1532.1,451.7 L1535.7,450.6 L1539.6,452.4 L1543.5,454.5 L1547.5,456.0 L1551.0,453.3 L1554.5,449.6 L1559.2,448.9 L1562.8,443.6 L1566.3,439.5 L1570.3,440.3 L1574.2,439.8 L1578.1,440.2 L1581.7,442.3 L1585.2,445.4 L1588.7,445.4 L1592.3,444.2 L1597.0,444.9 L1600.5,442.9 L1604.1,439.5 L1607.6,441.9 L1611.1,443.0 L1615.8,443.0 L1621.7,434.8 L1626.5,434.8 L1632.4,431.7 L1637.1,434.8 L1640.2,438.4 L1643.4,443.4 L1646.5,446.6 L1649.7,448.6 L1652.8,450.5 L1655.9,451.3 L1659.1,449.4 L1662.2,447.5 L1665.4,444.2 L1668.9,444.2 L1672.5,444.6 L1676.0,444.7 L1679.5,444.2 L1682.7,445.6 L1685.8,446.9 L1689.0,448.2 L1694.9,440.7 L1700.8,443.0 L1704.7,443.5 L1708.6,444.9 L1712.5,444.9 L1716.5,448.6 L1720.4,453.2 L1724.3,456.7 L1727.9,454.5 L1731.4,452.0 L1735.3,451.3 L1739.3,449.6 L1743.2,448.9 L1747.9,443.0 L1751.5,444.6 L1755.0,447.7 L1758.5,448.6 L1762.1,448.9 L1765.6,444.7 L1769.2,441.6 L1772.7,438.8 L1776.2,434.8 L1779.4,432.6 L1782.5,432.8 L1785.7,430.8 L1790.4,435.9 L1794.5,434.9 L1798.6,433.6 L1802.2,435.1 L1805.7,436.4 L1808.9,435.6 L1812.0,433.4 L1815.1,433.1 L1816,525.5 Z" fill="url(#fg2)"/>
<line x1="704" y1="398" x2="1770" y2="398" stroke="#2a2e31" stroke-width="1"/>
<line x1="704" y1="457" x2="1770" y2="457" stroke="#2a2e31" stroke-width="1"/>
<line x1="704" y1="516" x2="1770" y2="516" stroke="#2a2e31" stroke-width="1"/>
<path d="M658.0,429.8 L662.9,428.2 L665.3,432.3 L668.5,428.2 L674.1,433.1 L677.3,439.6 L680.5,445.1 L683.8,446.8 L687.0,449.1 L690.2,446.3 L693.4,444.3 L696.6,440.5 L699.8,435.5 L705.5,432.3 L711.1,437.9 L715.1,436.3 L719.5,442.4 L724.0,449.9 L727.2,452.3 L730.4,454.8 L735.2,450.7 L740.0,454.8 L743.2,454.9 L746.5,454.8 L750.5,453.8 L754.5,452.3 L757.7,457.2 L760.9,451.5 L764.1,447.4 L767.4,442.1 L770.6,437.1 L775.4,435.5 L779.4,431.4 L785.0,441.1 L788.3,442.9 L791.5,443.5 L797.1,448.3 L801.9,445.1 L805.5,439.4 L809.2,435.5 L812.4,439.8 L815.6,441.8 L818.8,445.9 L823.6,443.5 L826.8,443.7 L830.1,442.7 L833.3,440.7 L836.5,438.7 L839.7,435.7 L842.9,431.4 L846.1,432.9 L849.4,435.5 L852.6,436.8 L855.8,437.9 L859.0,440.3 L863.0,442.0 L867.0,442.7 L870.3,441.6 L873.5,440.3 L877.0,440.7 L880.5,441.7 L884.1,442.4 L887.6,443.6 L891.2,445.1 L894.8,447.6 L898.4,449.9 L902.8,447.0 L907.2,444.3 L912.1,442.7 L916.9,437.9 L921.3,437.0 L925.7,435.5 L929.3,435.9 L933.0,437.9 L936.2,441.3 L939.4,443.5 L942.6,439.5 L943.5,438.3 L947.1,438.6 L950.6,437.1 L954.2,440.7 L957.7,442.3 L961.2,443.0 L964.8,445.1 L968.3,447.0 L971.8,447.2 L975.4,449.6 L978.5,447.7 L981.7,445.2 L984.8,444.2 L988.0,443.9 L991.1,442.7 L994.2,441.8 L997.4,440.3 L1000.5,440.2 L1003.7,439.5 L1007.2,440.0 L1010.8,439.6 L1014.3,438.8 L1017.8,439.5 L1022.5,433.1 L1027.3,441.8 L1030.8,444.6 L1034.3,445.8 L1039.1,445.4 L1042.6,448.1 L1046.1,452.5 L1048.5,447.3 L1052.0,447.5 L1055.6,446.6 L1060.3,447.7 L1063.4,446.6 L1066.6,444.3 L1069.7,441.8 L1074.4,440.7 L1078.0,441.5 L1081.5,440.7 L1084.7,443.1 L1087.8,444.9 L1090.9,447.7 L1096.8,450.1 L1100.4,444.9 L1104.3,443.6 L1108.2,442.8 L1112.2,441.1 L1115.3,441.5 L1118.5,440.6 L1121.6,440.7 L1125.1,442.6 L1128.7,443.0 L1131.8,441.0 L1135.0,440.7 L1138.1,439.5 L1141.3,440.6 L1144.4,443.2 L1147.5,445.4 L1151.1,444.5 L1154.6,441.8 L1158.2,440.6 L1161.7,440.7 L1165.2,435.6 L1168.8,428.9 L1172.3,430.2 L1175.8,430.0 L1180.6,431.2 L1184.5,436.9 L1188.4,441.1 L1192.4,447.3 L1195.9,446.3 L1199.4,445.4 L1202.6,443.8 L1205.7,440.7 L1208.9,439.5 L1212.0,436.8 L1215.2,434.0 L1218.3,432.4 L1222.2,431.1 L1226.2,429.2 L1230.1,426.5 L1233.5,430.1 L1236.8,432.7 L1240.2,435.2 L1243.6,437.2 L1246.9,440.8 L1250.3,444.2 L1253.7,446.6 L1257.2,445.2 L1260.8,443.0 L1263.9,442.0 L1267.0,441.7 L1270.2,441.7 L1273.3,443.0 L1276.5,441.3 L1279.6,441.8 L1283.2,440.5 L1286.7,439.5 L1290.2,440.0 L1293.8,440.7 L1297.3,440.6 L1300.8,438.6 L1304.4,438.1 L1307.9,437.8 L1311.5,436.2 L1315.0,433.6 L1319.1,431.4 L1323.3,430.8 L1329.2,437.1 L1332.5,436.8 L1335.8,436.7 L1339.1,438.7 L1342.4,437.6 L1345.7,438.3 L1349.2,435.7 L1352.7,433.1 L1356.7,431.5 L1360.6,431.1 L1364.5,428.9 L1369.2,428.4 L1372.9,432.5 L1376.5,436.0 L1380.1,439.5 L1383.2,441.4 L1386.3,443.0 L1389.4,445.4 L1393.0,450.1 L1396.5,453.6 L1400.0,452.6 L1403.6,452.9 L1406.7,452.6 L1409.9,451.5 L1413.0,451.3 L1416.6,447.3 L1420.1,444.2 L1423.6,446.1 L1427.2,448.2 L1430.7,444.2 L1434.2,443.6 L1437.8,444.4 L1441.3,444.2 L1444.9,446.1 L1448.4,449.6 L1451.9,447.7 L1455.5,451.3 L1461.4,452.0 L1464.9,453.6 L1468.4,446.9 L1472.0,441.8 L1475.5,439.2 L1479.1,437.8 L1482.6,435.6 L1486.1,434.8 L1490.1,434.9 L1494.0,433.7 L1497.9,433.1 L1501.5,435.5 L1505.0,435.4 L1508.5,434.8 L1512.1,438.0 L1515.6,439.7 L1519.2,443.0 L1522.3,447.1 L1525.4,449.4 L1528.6,452.9 L1532.1,451.7 L1535.7,450.6 L1539.6,452.4 L1543.5,454.5 L1547.5,456.0 L1551.0,453.3 L1554.5,449.6 L1559.2,448.9 L1562.8,443.6 L1566.3,439.5 L1570.3,440.3 L1574.2,439.8 L1578.1,440.2 L1581.7,442.3 L1585.2,445.4 L1588.7,445.4 L1592.3,444.2 L1597.0,444.9 L1600.5,442.9 L1604.1,439.5 L1607.6,441.9 L1611.1,443.0 L1615.8,443.0 L1621.7,434.8 L1626.5,434.8 L1632.4,431.7 L1637.1,434.8 L1640.2,438.4 L1643.4,443.4 L1646.5,446.6 L1649.7,448.6 L1652.8,450.5 L1655.9,451.3 L1659.1,449.4 L1662.2,447.5 L1665.4,444.2 L1668.9,444.2 L1672.5,444.6 L1676.0,444.7 L1679.5,444.2 L1682.7,445.6 L1685.8,446.9 L1689.0,448.2 L1694.9,440.7 L1700.8,443.0 L1704.7,443.5 L1708.6,444.9 L1712.5,444.9 L1716.5,448.6 L1720.4,453.2 L1724.3,456.7 L1727.9,454.5 L1731.4,452.0 L1735.3,451.3 L1739.3,449.6 L1743.2,448.9 L1747.9,443.0 L1751.5,444.6 L1755.0,447.7 L1758.5,448.6 L1762.1,448.9 L1765.6,444.7 L1769.2,441.6 L1772.7,438.8 L1776.2,434.8 L1779.4,432.6 L1782.5,432.8 L1785.7,430.8 L1790.4,435.9 L1794.5,434.9 L1798.6,433.6 L1802.2,435.1 L1805.7,436.4 L1808.9,435.6 L1812.0,433.4 L1815.1,433.1" stroke="#5fbf9f" stroke-width="2.2" fill="none" stroke-linejoin="round"/>
</svg>
<span id="sgl18.0" class="t" style="left:673.30px;top:392.14px;font-size:10.47px;line-height:10.47px;color:#8cc7b3;font-weight:400;font-family:'Liberation Sans', sans-serif;transform:scaleX(1.0642);">18.0</span>
<span id="sgr18.0" class="t" style="left:1779.70px;top:392.14px;font-size:10.47px;line-height:10.47px;color:#8cc7b3;font-weight:400;font-family:'Liberation Sans', sans-serif;transform:scaleX(1.0642);">18.0</span>
<span id="sgl16.0" class="t" style="left:673.30px;top:451.14px;font-size:10.47px;line-height:10.47px;color:#8cc7b3;font-weight:400;font-family:'Liberation Sans', sans-serif;transform:scaleX(1.0642);">16.0</span>
<span id="sgr16.0" class="t" style="left:1779.70px;top:451.14px;font-size:10.47px;line-height:10.47px;color:#8cc7b3;font-weight:400;font-family:'Liberation Sans', sans-serif;transform:scaleX(1.0642);">16.0</span>
<span id="sgl14.0" class="t" style="left:673.30px;top:510.64px;font-size:10.47px;line-height:10.47px;color:#8cc7b3;font-weight:400;font-family:'Liberation Sans', sans-serif;transform:scaleX(1.0642);">14.0</span>
<span id="sgr14.0" class="t" style="left:1779.70px;top:510.64px;font-size:10.47px;line-height:10.47px;color:#8cc7b3;font-weight:400;font-family:'Liberation Sans', sans-serif;transform:scaleX(1.0642);">14.0</span>
<div class="b" style="left:657.0px;top:547.0px;width:80.0px;height:90.0px;background:#50b693;border-radius:14px;"></div>
<div class="b" style="left:691.0px;top:585.0px;width:12.5px;height:13.0px;background:#1e2d29;border-radius:2.5px;"></div>
<div class="b" style="left:757.0px;top:547.0px;width:354.0px;height:90.0px;background:#1e2124;border-radius:14px;"></div>
<span id="ps" class="t" style="left:809.70px;top:566.97px;font-size:56.17px;line-height:56.17px;color:#a8aaad;font-weight:700;font-family:'Liberation Mono', monospace;transform:scaleX(0.9236);">TR  ITAS</span>
<div class="b" style="left:1130.0px;top:547.0px;width:215.0px;height:90.0px;background:#233532;border-radius:14px;"></div>
<svg class="b" style="left:1200px;top:555px" width="75" height="75"><circle cx="37" cy="36.4" r="14" fill="#a6e680"/><circle cx="37" cy="36.4" r="7.5" fill="#f6fff2"/><path d="M22.3 21.4 A21 21 0 0 0 22.3 51.4" stroke="#ffffff" stroke-width="4" fill="none" stroke-linecap="round"/><path d="M51.7 21.4 A21 21 0 0 1 51.7 51.4" stroke="#ffffff" stroke-width="4" fill="none" stroke-linecap="round"/><path d="M10.5 27.4 A28 28 0 0 0 10.5 45.4" stroke="#b6ea78" stroke-width="4.5" fill="none" stroke-linecap="round"/><path d="M63.5 27.4 A28 28 0 0 1 63.5 45.4" stroke="#8ee0a0" stroke-width="4.5" fill="none" stroke-linecap="round"/></svg>
<div class="b" style="left:1365.0px;top:547.0px;width:334.0px;height:90.0px;background:#233532;border-radius:14px;"></div>
<span id="pty" class="t" style="left:1495.70px;top:563.42px;font-size:22.53px;line-height:22.53px;color:#52b896;font-weight:700;font-family:'Liberation Sans', sans-serif;transform:scaleX(0.9118);-webkit-text-stroke:0.50px #52b896;">No PTY</span>
<span id="tp" class="t" style="left:1432.50px;top:598.54px;font-size:21.80px;line-height:21.80px;color:#a3aeaa;font-weight:700;font-family:'Liberation Sans', sans-serif;transform:scaleX(0.8794);-webkit-text-stroke:0.40px #a3aeaa;">TP</span>
<span id="ta" class="t" style="left:1472.00px;top:598.54px;font-size:21.80px;line-height:21.80px;color:#a3aeaa;font-weight:700;font-family:'Liberation Sans', sans-serif;transform:scaleX(0.8929);-webkit-text-stroke:0.40px #a3aeaa;">TA</span>
<svg class="b" style="left:1559px;top:601px" width="27" height="17"><circle cx="8.5" cy="8.5" r="6.5" stroke="#a3aeaa" stroke-width="2" fill="none"/><circle cx="17" cy="8.5" r="6.5" stroke="#a3aeaa" stroke-width="2" fill="none"/></svg>
<span id="ms_m" class="t" style="left:1600.40px;top:598.54px;font-size:21.80px;line-height:21.80px;color:#ffffff;font-weight:700;font-family:'Liberation Sans', sans-serif;transform:scaleX(0.8805);">M</span>
<span id="ms_s" class="t" style="left:1617.00px;top:598.54px;font-size:21.80px;line-height:21.80px;color:#a3aeaa;font-weight:700;font-family:'Liberation Sans', sans-serif;transform:scaleX(0.9280);">S</span>
<div class="b" style="left:1718.5px;top:547.5px;width:98.2px;height:419.0px;background:#1e2124;border-radius:14px;"></div>
<span id="af" class="t" style="left:1754.30px;top:563.22px;font-size:22.53px;line-height:22.53px;color:#52b896;font-weight:700;font-family:'Liberation Sans', sans-serif;transform:scaleX(0.8862);-webkit-text-stroke:0.50px #52b896;">AF</span>
<span id="afl0" class="t" style="left:1754.30px;top:604.85px;font-size:14.83px;line-height:14.83px;color:#f0f0f0;font-weight:400;font-family:'Liberation Sans', sans-serif;transform:scaleX(0.9108);">92.2</span>
<span id="afl1" class="t" style="left:1754.30px;top:625.88px;font-size:14.83px;line-height:14.83px;color:#f0f0f0;font-weight:400;font-family:'Liberation Sans', sans-serif;transform:scaleX(0.9108);">92.7</span>
<span id="afl2" class="t" style="left:1752.40px;top:646.91px;font-size:14.83px;line-height:14.83px;color:#f0f0f0;font-weight:400;font-family:'Liberation Sans', sans-serif;transform:scaleX(0.8569);">106.7</span>
<span id="afl3" class="t" style="left:1752.40px;top:667.94px;font-size:14.83px;line-height:14.83px;color:#f0f0f0;font-weight:400;font-family:'Liberation Sans', sans-serif;transform:scaleX(0.8569);">106.8</span>
<div class="b" style="left:657.0px;top:657.4px;width:333.5px;height:122.1px;background:#1e2124;border-radius:14px;"></div>
<div class="b" style="left:1011.0px;top:657.4px;width:334.0px;height:122.1px;background:#1e2124;border-radius:14px;"></div>
<div class="b" style="left:1365.0px;top:657.4px;width:334.0px;height:122.1px;background:#1e2124;border-radius:14px;"></div>
<span id="pic" class="t" style="left:784.00px;top:672.86px;font-size:23.55px;line-height:23.55px;color:#52b896;font-weight:700;font-family:'Liberation Sans', sans-serif;transform:scaleX(0.8334);-webkit-text-stroke:0.50px #52b896;">PI CODE</span>
<span id="pi" class="t" style="left:764.50px;top:715.70px;font-size:52.33px;line-height:52.33px;color:#ffffff;font-weight:400;font-family:'Liberation Sans', sans-serif;transform:scaleX(0.9014);-webkit-text-stroke:1.10px #1e2124;">E24D</span>
<span id="frl" class="t" style="left:1114.60px;top:672.86px;font-size:23.55px;line-height:23.55px;color:#52b896;font-weight:700;font-family:'Liberation Sans', sans-serif;transform:scaleX(0.8604);-webkit-text-stroke:0.50px #52b896;">FREQUENCY</span>
<span id="fr2" class="t" style="left:1158.00px;top:706.56px;font-size:12.21px;line-height:12.21px;color:#c8cacc;font-weight:400;font-family:'Liberation Sans', sans-serif;transform:scaleX(1.0341);">93.400</span>
<span id="fr" class="t" style="left:1099.00px;top:717.42px;font-size:50.29px;line-height:50.29px;color:#ffffff;font-weight:400;font-family:'Liberation Sans', sans-serif;transform:scaleX(1.0111);-webkit-text-stroke:1.10px #1e2124;">93.300</span>
<span id="sigl" class="t" style="left:1493.60px;top:672.86px;font-size:23.55px;line-height:23.55px;color:#52b896;font-weight:700;font-family:'Liberation Sans', sans-serif;transform:scaleX(0.8587);-webkit-text-stroke:0.50px #52b896;">SIGNAL</span>
<svg class="b" style="left:1501px;top:704px" width="12" height="13"><path d="M6 12.5 L6 1.5 M1.5 6 L6 1.5 L10.5 6" stroke="#d8dadc" stroke-width="1.6" fill="none"/></svg>
<span id="sig2" class="t" style="left:1515.90px;top:704.89px;font-size:12.65px;line-height:12.65px;color:#d0d2d4;font-weight:400;font-family:'Liberation Sans', sans-serif;transform:scaleX(0.9555);">17.4 dBf</span>
<span id="sig16" class="t" style="left:1463.50px;top:717.42px;font-size:50.29px;line-height:50.29px;color:#ffffff;font-weight:400;font-family:'Liberation Sans', sans-serif;transform:scaleX(0.9117);-webkit-text-stroke:1.10px #1e2124;">16</span>
<span id="sig5" class="t" style="left:1518.00px;top:717.42px;font-size:50.29px;line-height:50.29px;color:#d8dadc;font-weight:400;font-family:'Liberation Sans', sans-serif;transform:scaleX(0.8274);-webkit-text-stroke:1.10px #1e2124;">.5</span>
<span id="sigdbf" class="t" style="left:1567.20px;top:739.08px;font-size:24.71px;line-height:24.71px;color:#a9adb0;font-weight:400;font-family:'Liberation Sans', sans-serif;transform:scaleX(0.9328);-webkit-text-stroke:0.90px #1e2124;">dBf</span>
<div class="b" style="left:657.0px;top:799.6px;width:105.5px;height:48.0px;background:#50b693;border-radius:16px;"></div>
<span id="west" class="t" style="left:667.00px;top:816.03px;font-size:15.55px;line-height:15.55px;color:#24473d;font-weight:400;font-family:'Liberation Sans', sans-serif;transform:scaleX(0.8167);">West</span>
<svg class="b" style="left:743px;top:819px" width="12" height="9"><path d="M1.5 2 L6 6.5 L10.5 2" stroke="#24473d" stroke-width="1.8" fill="none"/></svg>
<div class="b" style="left:778.2px;top:799.6px;width:212.4px;height:48.0px;background:#50b693;border-radius:16px;"></div>
<span id="ceq" class="t" style="left:820.50px;top:816.52px;font-size:14.97px;line-height:14.97px;color:#1c3a32;font-weight:700;font-family:'Liberation Sans', sans-serif;transform:scaleX(0.7178);">cEQ</span>
<span id="ims" class="t" style="left:927.00px;top:816.52px;font-size:14.97px;line-height:14.97px;color:#1c3a32;font-weight:700;font-family:'Liberation Sans', sans-serif;transform:scaleX(0.8150);">iMS</span>
<div class="b" style="left:1011.0px;top:799.6px;width:334.0px;height:48.0px;background:#50b693;border-radius:16px;"></div>
<div class="b" style="left:1094.0px;top:799.6px;width:167.0px;height:48.0px;background:#1e2124;border-radius:0px;"></div>
<svg class="b" style="left:1045px;top:817px" width="12" height="14"><path d="M9 1.5 L3.5 7 L9 12.5" stroke="#1c3a32" stroke-width="2" fill="none"/></svg>
<svg class="b" style="left:1297px;top:817px" width="12" height="14"><path d="M3 1.5 L8.5 7 L3 12.5" stroke="#1c3a32" stroke-width="2" fill="none"/></svg>
<span id="frin" class="t" style="left:1116.00px;top:816.03px;font-size:15.55px;line-height:15.55px;color:#a9b0b0;font-weight:400;font-family:'Liberation Sans', sans-serif;transform:scaleX(0.7937);">Frequency</span>
<div class="b" style="left:1365.2px;top:800.2px;width:177.6px;height:47.3px;background:#50b693;border-radius:14px;"></div>
<div class="b" style="left:1493.8px;top:800.2px;width:49.0px;height:47.3px;background:#5ed3a9;border-radius:18px 14px 14px 18px / 24px 14px 14px 24px;"></div>
<svg class="b" style="left:1509px;top:816px" width="22" height="17"><path d="M1 5.5 L5 5.5 L10 1 L10 16 L5 11.5 L1 11.5 Z" fill="#3fa582"/><path d="M13 5 Q15 8.5 13 12 M16 3 Q19.5 8.5 16 14 M19 1.5 Q23 8.5 19 15.5" stroke="#3fa582" stroke-width="1.5" fill="none"/></svg>
<div class="b" style="left:1558.0px;top:800.2px;width:78.8px;height:47.3px;background:#50b693;border-radius:16px;"></div>
<span id="auto" class="t" style="left:1568.00px;top:816.46px;font-size:15.99px;line-height:15.99px;color:#24473d;font-weight:400;font-family:'Liberation Sans', sans-serif;transform:scaleX(0.7905);">Auto</span>
<svg class="b" style="left:1617px;top:820px" width="12" height="9"><path d="M1.5 2 L6 6.5 L10.5 2" stroke="#24473d" stroke-width="1.8" fill="none"/></svg>
<div class="b" style="left:1652.0px;top:800.2px;width:47.0px;height:47.3px;background:#50b693;border-radius:16px;"></div>
<svg class="b" style="left:1667px;top:815px" width="18" height="18"><path d="M1.5 0.5 L1.5 17.5" stroke="#1c3a32" stroke-width="2.6"/><path d="M2.5 2 Q6 0 9 2 Q12.5 4 16.5 2 L16.5 10.5 Q12.5 12.5 9 10.5 Q6 8.5 2.5 10.5 Z" fill="#1c3a32"/></svg>
<div class="b" style="left:657.0px;top:867.7px;width:688.0px;height:99.3px;background:#1e2124;border-radius:16px;"></div>
<span id="rtl" class="t" style="left:942.20px;top:879.22px;font-size:23.84px;line-height:23.84px;color:#52b896;font-weight:700;font-family:'Liberation Sans', sans-serif;transform:scaleX(0.8570);-webkit-text-stroke:0.50px #52b896;">RADIOTEXT</span>
<span id="rt0" class="t" style="left:766.00px;top:910.76px;font-size:16.24px;line-height:16.24px;color:#a8aaad;font-weight:400;font-family:'Liberation Mono', monospace;transform:scaleX(0.7897);">0</span>
<span id="rt1" class="t" style="left:1136.00px;top:910.76px;font-size:16.24px;line-height:16.24px;color:#a8aaad;font-weight:400;font-family:'Liberation Mono', monospace;transform:scaleX(0.8208);">93,3</span>
<span id="rt2" class="t" style="left:1186.50px;top:910.76px;font-size:16.24px;line-height:16.24px;color:#f4f4f4;font-weight:700;font-family:'Liberation Mono', monospace;transform:scaleX(0.8038);">MHz</span>
<div class="b" style="left:1365.0px;top:868.0px;width:334.0px;height:99.0px;background:#1e2124;border-radius:16px;"></div>
<span id="stn" class="t" style="left:1473.00px;top:879.56px;font-size:19.77px;line-height:19.77px;color:#52b896;font-weight:700;font-family:'Liberation Sans', sans-serif;transform:scaleX(0.9043);-webkit-text-stroke:0.40px #52b896;">Radio Trinitas</span>
<span id="city" class="t" style="left:1486.00px;top:913.12px;font-size:16.86px;line-height:16.86px;color:#f4f4f4;font-weight:400;font-family:'Liberation Sans', sans-serif;transform:scaleX(0.8756);">Ceahlau</span>
<span id="rou" class="t" style="left:1544.50px;top:915.71px;font-size:13.81px;line-height:13.81px;color:#d8dadc;font-weight:400;font-family:'Liberation Sans', sans-serif;transform:scaleX(0.8558);">[ROU]</span>
<span id="erp" class="t" style="left:1445.40px;top:941.39px;font-size:14.53px;line-height:14.53px;color:#f0f0f0;font-weight:400;font-family:'Liberation Sans', sans-serif;transform:scaleX(0.8823);">3 kW [V] ▪ 515 km ▪ 220°</span>
<div class="b" style="left:1594.0px;top:938.5px;width:23.7px;height:19.5px;background:#3a7f68;border-radius:3px;"></div>
<span id="plus1" class="t" style="left:1598.50px;top:942.54px;font-size:12.35px;line-height:12.35px;color:#1f3d35;font-weight:400;font-family:'Liberation Sans', sans-serif;transform:scaleX(1.0300);">+1</span>
<div class="b" style="left:657.5px;top:988.4px;width:104.5px;height:47.6px;background:#1c1f22;border-radius:14px;"></div>
<div class="b" style="left:774.8px;top:988.4px;width:104.5px;height:47.6px;background:#1c1f22;border-radius:14px;"></div>
<div class="b" style="left:891.5px;top:988.4px;width:104.5px;height:47.6px;background:#1c1f22;border-radius:14px;"></div>
<div class="b" style="left:1009.4px;top:988.4px;width:104.5px;height:47.6px;background:#1c1f22;border-radius:14px;"></div>
<div class="b" style="left:1126.6px;top:988.4px;width:104.5px;height:47.6px;background:#1c1f22;border-radius:14px;"></div>
<div class="b" style="left:1244.0px;top:988.4px;width:104.5px;height:47.6px;background:#1c1f22;border-radius:14px;"></div>
<div class="b" style="left:1360.5px;top:988.4px;width:104.5px;height:47.6px;background:#1c1f22;border-radius:14px;"></div>
<div class="b" style="left:1477.2px;top:988.4px;width:104.5px;height:47.6px;background:#1c1f22;border-radius:14px;"></div>
<div class="b" style="left:1594.7px;top:988.4px;width:104.5px;height:47.6px;background:#1c1f22;border-radius:14px;"></div>
<div class="b" style="left:1712.3px;top:988.4px;width:104.5px;height:47.6px;background:#1c1f22;border-radius:14px;"></div>
<span id="p1a" class="t" style="left:689.40px;top:997.37px;font-size:15.18px;line-height:15.18px;color:#f0f0f0;font-weight:400;font-family:'Liberation Mono', monospace;transform:scaleX(0.9005);-webkit-text-stroke:0.30px #f0f0f0;">102.2</span>
<span id="p1b" class="t" style="left:689.40px;top:1015.37px;font-size:15.18px;line-height:15.18px;color:#f4f4f4;font-weight:700;font-family:'Liberation Mono', monospace;transform:scaleX(0.9005);">71006</span>
<svg class="b" style="left:735.0px;top:994.5px" width="18" height="10"><path d="M1 1 L1 4 M1 1 L3 1 L3 3 L1 3" stroke="#f0f0f0" stroke-width="1.1" fill="none"/><path d="M4 2 L7 2 M5.5 2 L5.5 9" stroke="#f0f0f0" stroke-width="1.6"/><circle cx="9" cy="2.6" r="1.4" fill="none" stroke="#f0f0f0" stroke-width="1"/><path d="M13.5 1.5 L15 0.5 L15 7.5" stroke="#f0f0f0" stroke-width="1.4" fill="none"/></svg>
<svg class="b" style="left:792.3px;top:987.0px" width="70" height="50"><g stroke="#34453a" stroke-width="3" fill="none"><circle cx="35" cy="25" r="12.5"/><path d="M21 11.5 A19 19 0 0 0 21 38.5 M49 11.5 A19 19 0 0 1 49 38.5"/><path d="M12.5 16 A25 25 0 0 0 12.5 34 M57.5 16 A25 25 0 0 1 57.5 34"/></g></svg>
<span id="p2" class="t" style="left:810.40px;top:1006.37px;font-size:15.18px;line-height:15.18px;color:#f0f0f0;font-weight:400;font-family:'Liberation Mono', monospace;transform:scaleX(0.9060);-webkit-text-stroke:0.40px #f0f0f0;">87.8</span>
<svg class="b" style="left:848.0px;top:1003.5px" width="18" height="10"><path d="M1 1 L1 4 M1 1 L3 1 L3 3 L1 3" stroke="#f0f0f0" stroke-width="1.1" fill="none"/><path d="M4 2 L7 2 M5.5 2 L5.5 9" stroke="#f0f0f0" stroke-width="1.6"/><circle cx="9" cy="2.6" r="1.4" fill="none" stroke="#f0f0f0" stroke-width="1"/><path d="M13.5 1.5 L15 0.5 L15 7.5" stroke="#f0f0f0" stroke-width="1.4" fill="none"/></svg>
<svg class="b" style="left:908.5px;top:987.0px" width="70" height="50"><g stroke="#34453a" stroke-width="3" fill="none"><circle cx="35" cy="25" r="12.5"/><path d="M21 11.5 A19 19 0 0 0 21 38.5 M49 11.5 A19 19 0 0 1 49 38.5"/><path d="M12.5 16 A25 25 0 0 0 12.5 34 M57.5 16 A25 25 0 0 1 57.5 34"/></g></svg>
<span id="p3" class="t" style="left:924.00px;top:1006.37px;font-size:15.18px;line-height:15.18px;color:#f0f0f0;font-weight:400;font-family:'Liberation Mono', monospace;transform:scaleX(0.8895);-webkit-text-stroke:0.40px #f0f0f0;">105.2</span>
<svg class="b" style="left:969.0px;top:1003.5px" width="18" height="10"><path d="M1 1 L1 4 M1 1 L3 1 L3 3 L1 3" stroke="#f0f0f0" stroke-width="1.1" fill="none"/><path d="M4 2 L7 2 M5.5 2 L5.5 9" stroke="#f0f0f0" stroke-width="1.6"/><circle cx="9" cy="2.6" r="1.4" fill="none" stroke="#f0f0f0" stroke-width="1"/><path d="M13.5 1.5 L15 0.5 L15 7.5" stroke="#f0f0f0" stroke-width="1.4" fill="none"/></svg>
<span id="p4a" class="t" style="left:1045.00px;top:997.37px;font-size:15.18px;line-height:15.18px;color:#f0f0f0;font-weight:400;font-family:'Liberation Mono', monospace;transform:scaleX(0.8786);-webkit-text-stroke:0.30px #f0f0f0;">89.7</span>
<span id="p4b" class="t" style="left:1027.80px;top:1015.37px;font-size:15.18px;line-height:15.18px;color:#f4f4f4;font-weight:700;font-family:'Liberation Mono', monospace;transform:scaleX(0.9198);">CHAMPION</span>
<svg class="b" style="left:1082.0px;top:994.5px" width="18" height="10"><path d="M1 1 L1 4 M1 1 L3 1 L3 3 L1 3" stroke="#f0f0f0" stroke-width="1.1" fill="none"/><path d="M4 2 L7 2 M5.5 2 L5.5 9" stroke="#f0f0f0" stroke-width="1.6"/><circle cx="9" cy="2.6" r="1.4" fill="none" stroke="#f0f0f0" stroke-width="1"/><path d="M13.5 1.5 L15 0.5 L15 7.5" stroke="#f0f0f0" stroke-width="1.4" fill="none"/></svg>
<svg class="b" style="left:1150px;top:992px" width="60" height="40"><defs><linearGradient id="bl" x1="0" y1="0" x2="1" y2="0"><stop offset="0" stop-color="#f26a12"/><stop offset="1" stop-color="#f7a812"/></linearGradient></defs><circle cx="39" cy="19" r="16.5" fill="url(#bl)" stroke="#1a1008" stroke-width="1.2"/><path d="M27 9.5 L22 10.5 L20 8.5 L13 12 L11 10.5 L6 17 L4.5 22 L6 27 L5 30 L10 32 L14 35 L19 33.5 L24 35 L28 31 Z" fill="#f06412" stroke="#1a1008" stroke-width="1"/><text x="29" y="26.5" text-anchor="middle" font-family="Liberation Sans" font-weight="700" font-size="14" fill="#fff8e8" transform="rotate(-9 29 21)" textLength="35" lengthAdjust="spacingAndGlyphs">БЛІЦ</text></svg>
<svg class="b" style="left:1255px;top:995px" width="86" height="38"><text x="30" y="12.5" font-family="Liberation Sans" font-weight="700" font-size="13" fill="#e0202a" stroke="#5a0a10" stroke-width="0.5" textLength="43" lengthAdjust="spacingAndGlyphs">101.9fm</text><text x="5" y="32" font-family="Liberation Sans" font-weight="700" font-size="20" fill="#111" stroke="#f4f4f4" stroke-width="2.4" textLength="70" lengthAdjust="spacingAndGlyphs" paint-order="stroke">ШЛЯГЕР</text><text x="5" y="32" font-family="Liberation Sans" font-weight="700" font-size="20" fill="#111" textLength="70" lengthAdjust="spacingAndGlyphs">ШЛЯГЕР</text></svg>
<svg class="b" style="left:1360px;top:990px" width="104" height="44"><defs><path id="rarc" d="M16 20 Q50 8 84 20"/></defs><text font-family="Liberation Sans" font-size="6.5" fill="#d8d8d8" letter-spacing="0.6"><textPath href="#rarc">легке та спокійне радіо</textPath></text><text x="5" y="37" font-family="Liberation Serif" font-size="17" fill="#f0f0f0" textLength="80" lengthAdjust="spacing">RELAX</text><path d="M86 6 Q90 12 92 14 Q95 11 99 8 Q95 16 90 22 L86 26 Q89 20 89 17 Q87 12 86 6 Z" fill="#f0f0f0"/></svg>
<svg class="b" style="left:1490px;top:990px" width="80" height="44"><path d="M44 12 Q47 5 55 4 Q53 12 44 12 Z" fill="#3aa040"/><text x="9" y="24" font-family="Liberation Sans" font-weight="700" font-size="11" fill="#f4f4f4" textLength="60" lengthAdjust="spacingAndGlyphs">РадіоЛюкс</text><path d="M42 14 Q38 22 32 29 M43 14 Q46 22 51 27" stroke="#f0f0f0" stroke-width="1.2" fill="none"/><circle cx="31.5" cy="33" r="6" fill="#e03838"/><circle cx="50.8" cy="30" r="6" fill="#e03838"/><circle cx="29.5" cy="31" r="1.5" fill="#ff9090"/><circle cx="48.8" cy="28" r="1.5" fill="#ff9090"/></svg>
<svg class="b" style="left:1612px;top:990px" width="72" height="44"><defs><path id="parc" d="M14 14 Q32 6 52 12"/></defs><text font-family="Liberation Sans" font-size="5" fill="#c09050"><textPath href="#parc">Слухай радіо</textPath></text><text x="13" y="29" font-family="Liberation Sans" font-size="12" fill="#9ad060" textLength="34" lengthAdjust="spacingAndGlyphs">ПЕРЕЦЬ</text><path d="M50 10 Q56 12 54 22 Q52 32 50 40 Q46 30 46 20 Q46 12 50 10 Z" fill="#c83020"/><path d="M50 10 Q54 4 58 7" stroke="#60a040" stroke-width="1.5" fill="none"/></svg>
<svg class="b" style="left:1754px;top:992px" width="22" height="40"><text x="2" y="7.5" font-family="Liberation Sans" font-size="7" fill="#3a9ee8" textLength="15" lengthAdjust="spacingAndGlyphs">105.1</text><rect x="3" y="9" width="13" height="15" fill="#1a8ee0"/><text x="5.5" y="23" font-family="Liberation Sans" font-weight="700" font-size="15" fill="#fff">1</text><text x="2.5" y="37" font-family="Liberation Sans" font-weight="700" font-size="11" fill="#f0f0f0" textLength="15" lengthAdjust="spacingAndGlyphs">fm</text></svg>
<svg class="b" style="left:1768px;top:1034px" width="89" height="31"><rect x="0.5" y="0.5" width="88" height="30" fill="#0c0c0c" stroke="#bbb" stroke-width="1"/><text x="4" y="23" font-family="Liberation Sans" font-weight="700" font-size="19" fill="#fff" textLength="38" lengthAdjust="spacingAndGlyphs">PRO</text><rect x="43" y="5" width="29" height="21" fill="#e8c020"/><rect x="43" y="5" width="10" height="21" fill="#30a0e0"/><rect x="62" y="5" width="10" height="21" fill="#e03030"/><text x="44" y="23" font-family="Liberation Sans" font-weight="700" font-size="18" fill="#fff" stroke="#333" stroke-width="0.6" textLength="27" lengthAdjust="spacingAndGlyphs">TV</text><text x="83" y="4" font-family="Liberation Sans" font-weight="700" font-size="8" fill="#fff" transform="rotate(90 83 4)" textLength="22" lengthAdjust="spacingAndGlyphs">NET.UA</text></svg>
<div class="b" style="left:51.0px;top:16.0px;width:600.0px;height:704.0px;background:#30524a;border-radius:13px;"></div>
<span id="mtitle" class="t" style="left:61.00px;top:30.75px;font-size:15.41px;line-height:15.41px;color:#eef2ec;font-weight:400;font-family:'Liberation Sans', sans-serif;transform:scaleX(0.9707);">93.300 MHz | E24D | Radio Trinitas from Ceahlau [ROU] [515 km]</span>
<span id="mx" class="t" style="left:631.00px;top:30.75px;font-size:15.41px;line-height:15.41px;color:#f4f4f0;font-weight:400;font-family:'Liberation Sans', sans-serif;transform:scaleX(0.7781);">X</span>
<div class="b" style="left:66.5px;top:73.2px;width:13px;height:13px;border-radius:50%;background:#fdfdfd"></div>
<span id="rad_100KM" class="t" style="left:86.70px;top:76.78px;font-size:11.48px;line-height:11.48px;color:#55b090;font-weight:700;font-family:'Liberation Sans', sans-serif;transform:scaleX(0.9584);">100 KM</span>
<div class="b" style="left:148.0px;top:73.2px;width:13px;height:13px;border-radius:50%;background:#fdfdfd"></div>
<span id="rad_250KM" class="t" style="left:168.00px;top:76.78px;font-size:11.48px;line-height:11.48px;color:#55b090;font-weight:700;font-family:'Liberation Sans', sans-serif;transform:scaleX(0.9858);">250 KM</span>
<div class="b" style="left:231.3px;top:73.2px;width:13px;height:13px;border-radius:50%;background:#fdfdfd"></div>
<span id="rad_500KM" class="t" style="left:250.60px;top:76.78px;font-size:11.48px;line-height:11.48px;color:#55b090;font-weight:700;font-family:'Liberation Sans', sans-serif;transform:scaleX(0.9858);">500 KM</span>
<div class="b" style="left:313.2px;top:73.2px;width:13px;height:13px;border-radius:50%;background:#fff;box-sizing:border-box;border:2px solid #fff"><div style="position:absolute;left:0.5px;top:0.5px;width:8px;height:8px;border-radius:50%;background:#1a5fd0"></div></div>
<span id="rad_750KM" class="t" style="left:332.90px;top:76.78px;font-size:11.48px;line-height:11.48px;color:#55b090;font-weight:700;font-family:'Liberation Sans', sans-serif;transform:scaleX(0.9833);">750 KM</span>
<div class="b" style="left:395.0px;top:73.2px;width:13px;height:13px;border-radius:50%;background:#fdfdfd"></div>
<span id="rad_1000KM" class="t" style="left:415.60px;top:76.78px;font-size:11.48px;line-height:11.48px;color:#55b090;font-weight:700;font-family:'Liberation Sans', sans-serif;transform:scaleX(0.9754);">1000 KM</span>
<div class="b" style="left:484.3px;top:73.2px;width:13px;height:13px;border-radius:50%;background:#fdfdfd"></div>
<span id="rad_NONE" class="t" style="left:504.00px;top:76.78px;font-size:11.48px;line-height:11.48px;color:#55b090;font-weight:700;font-family:'Liberation Sans', sans-serif;transform:scaleX(0.9354);">NONE</span>
<div class="b" style="left:552.0px;top:74.0px;width:35.0px;height:12.0px;background:#0a8a0a;border-radius:6px;"></div>
<div class="b" style="left:551.5px;top:72.5px;width:14px;height:14px;border-radius:50%;background:#fdfdfd"></div>
<span id="txpos" class="t" style="left:596.60px;top:74.54px;font-size:12.35px;line-height:12.35px;color:#55b090;font-weight:700;font-family:'Liberation Sans', sans-serif;transform:scaleX(0.8125);">TXPOS</span>
<svg class="b" style="left:51px;top:101px" width="600" height="565" viewBox="51 101 600 565">
<defs><filter id="terr" x="0" y="0" width="100%" height="100%"><feTurbulence type="fractalNoise" baseFrequency="0.28 0.22" numOctaves="3" seed="11"/><feColorMatrix type="matrix" values="0 0 0 0 0.30  0 0 0 0 0.45  0 0 0 0 0.39  3.6 0 0 0 -1.25"/><feComposite in2="SourceGraphic" operator="in"/></filter><linearGradient id="mtg" x1="0" y1="0" x2="1" y2="0"><stop offset="0" stop-color="#a8c8b6"/><stop offset="1" stop-color="#c4dccf"/></linearGradient></defs>
<rect x="51" y="101" width="600" height="565" fill="#d6e9e0"/>
<filter id="terr2" x="0" y="0" width="100%" height="100%"><feTurbulence type="fractalNoise" baseFrequency="0.22 0.32" numOctaves="3" seed="29"/><feColorMatrix type="matrix" values="0 0 0 0 0.96  0 0 0 0 0.98  0 0 0 0 0.97  3.2 0 0 0 -1.55"/><feComposite in2="SourceGraphic" operator="in"/></filter>
<path d="M49.0,428.8 L56.9,426.9 L58.0,435.7 L58.6,432.2 L66.7,434.1 L63.7,437.7 L72.0,436.0 L71.3,440.2 L79.6,443.1 L82.9,442.3 L80.9,449.0 L89.5,448.9 L86.0,447.5 L92.2,450.0 L98.1,458.4 L94.3,455.5 L103.1,461.8 L105.6,461.6 L101.3,463.7 L110.4,466.2 L108.5,470.4 L111.7,473.0 L119.2,473.2 L112.5,483.7 L123.8,486.9 L121.3,489.5 L128.3,485.2 L128.5,494.4 L129.6,494.2 L127.9,495.4 L129.3,495.7 L134.9,500.9 L139.1,501.5 L142.0,510.9 L144.2,516.0 L146.0,515.8 L138.8,520.8 L142.1,519.7 L148.6,525.2 L147.8,532.7 L151.5,530.1 L149.5,538.6 L153.4,541.2 L153.9,538.6 L157.3,548.2 L155.4,551.3 L164.6,554.7 L165.2,550.1 L164.7,562.1 L160.3,559.6 L163.8,565.7 L166.8,568.6 L171.7,567.3 L165.9,572.0 L167.9,574.9 L177.8,586.2 L170.3,586.2 L174.0,587.8 L175.7,594.5 L179.5,595.1 L176.9,598.3 L177.5,603.9 L184.7,605.5 L179.5,606.8 L183.7,614.4 L189.1,615.5 L190.5,621.2 L188.1,622.1 L190.0,628.7 L190.5,631.9 L192.1,630.8 L194.1,638.6 L190.7,639.2 L195.7,647.5 L202.2,646.2 L203.3,654.1 L198.3,654.5 L198.4,661.7 L205.2,666.2 L205.0,666.0 L51,666 Z" fill="#c8dccf"/>
<path d="M48.9,455.4 L53.2,457.7 L58.5,455.3 L56.8,463.4 L62.0,460.4 L71.1,464.2 L73.0,466.1 L74.7,465.4 L77.9,473.1 L80.2,473.9 L83.9,471.1 L87.2,477.8 L86.0,475.9 L93.1,482.0 L94.5,487.8 L97.0,490.6 L97.0,492.2 L99.9,495.8 L105.9,491.7 L102.5,495.2 L111.7,499.5 L110.7,501.7 L111.4,505.8 L111.8,510.7 L115.3,516.6 L117.8,520.1 L120.9,523.9 L121.0,520.6 L124.2,530.4 L126.2,530.6 L126.4,531.0 L129.0,537.3 L126.3,536.5 L132.5,547.3 L128.0,549.1 L132.3,547.2 L133.0,555.5 L139.3,553.0 L138.9,556.4 L141.4,562.0 L144.4,570.5 L143.0,574.0 L143.1,569.9 L147.1,572.9 L145.6,579.3 L150.3,580.6 L147.2,589.6 L150.8,593.7 L156.8,592.4 L154.8,596.8 L157.7,600.8 L158.4,604.3 L162.9,606.7 L160.2,611.8 L160.1,611.7 L167.4,616.8 L165.4,616.1 L165.5,624.2 L163.5,628.0 L169.5,627.1 L170.6,633.9 L172.2,636.5 L173.6,643.1 L169.3,641.3 L175.6,652.0 L173.4,651.5 L177.3,653.9 L176.6,657.4 L177.8,663.2 L180.0,666.0 L51,666 Z" fill="#b8d0c2"/>
<path d="M49.0,428.8 L56.9,426.9 L58.0,435.7 L58.6,432.2 L66.7,434.1 L63.7,437.7 L72.0,436.0 L71.3,440.2 L79.6,443.1 L82.9,442.3 L80.9,449.0 L89.5,448.9 L86.0,447.5 L92.2,450.0 L98.1,458.4 L94.3,455.5 L103.1,461.8 L105.6,461.6 L101.3,463.7 L110.4,466.2 L108.5,470.4 L111.7,473.0 L119.2,473.2 L112.5,483.7 L123.8,486.9 L121.3,489.5 L128.3,485.2 L128.5,494.4 L129.6,494.2 L127.9,495.4 L129.3,495.7 L134.9,500.9 L139.1,501.5 L142.0,510.9 L144.2,516.0 L146.0,515.8 L138.8,520.8 L142.1,519.7 L148.6,525.2 L147.8,532.7 L151.5,530.1 L149.5,538.6 L153.4,541.2 L153.9,538.6 L157.3,548.2 L155.4,551.3 L164.6,554.7 L165.2,550.1 L164.7,562.1 L160.3,559.6 L163.8,565.7 L166.8,568.6 L171.7,567.3 L165.9,572.0 L167.9,574.9 L177.8,586.2 L170.3,586.2 L174.0,587.8 L175.7,594.5 L179.5,595.1 L176.9,598.3 L177.5,603.9 L184.7,605.5 L179.5,606.8 L183.7,614.4 L189.1,615.5 L190.5,621.2 L188.1,622.1 L190.0,628.7 L190.5,631.9 L192.1,630.8 L194.1,638.6 L190.7,639.2 L195.7,647.5 L202.2,646.2 L203.3,654.1 L198.3,654.5 L198.4,661.7 L205.2,666.2 L205.0,666.0 L51,666 Z" fill="#fff" filter="url(#terr)"/>
<path d="M49.0,428.8 L56.9,426.9 L58.0,435.7 L58.6,432.2 L66.7,434.1 L63.7,437.7 L72.0,436.0 L71.3,440.2 L79.6,443.1 L82.9,442.3 L80.9,449.0 L89.5,448.9 L86.0,447.5 L92.2,450.0 L98.1,458.4 L94.3,455.5 L103.1,461.8 L105.6,461.6 L101.3,463.7 L110.4,466.2 L108.5,470.4 L111.7,473.0 L119.2,473.2 L112.5,483.7 L123.8,486.9 L121.3,489.5 L128.3,485.2 L128.5,494.4 L129.6,494.2 L127.9,495.4 L129.3,495.7 L134.9,500.9 L139.1,501.5 L142.0,510.9 L144.2,516.0 L146.0,515.8 L138.8,520.8 L142.1,519.7 L148.6,525.2 L147.8,532.7 L151.5,530.1 L149.5,538.6 L153.4,541.2 L153.9,538.6 L157.3,548.2 L155.4,551.3 L164.6,554.7 L165.2,550.1 L164.7,562.1 L160.3,559.6 L163.8,565.7 L166.8,568.6 L171.7,567.3 L165.9,572.0 L167.9,574.9 L177.8,586.2 L170.3,586.2 L174.0,587.8 L175.7,594.5 L179.5,595.1 L176.9,598.3 L177.5,603.9 L184.7,605.5 L179.5,606.8 L183.7,614.4 L189.1,615.5 L190.5,621.2 L188.1,622.1 L190.0,628.7 L190.5,631.9 L192.1,630.8 L194.1,638.6 L190.7,639.2 L195.7,647.5 L202.2,646.2 L203.3,654.1 L198.3,654.5 L198.4,661.7 L205.2,666.2 L205.0,666.0 L51,666 Z" fill="#fff" filter="url(#terr2)" opacity="0.45"/>
<filter id="blob"><feTurbulence type="fractalNoise" baseFrequency="0.04" numOctaves="2" seed="4"/><feDisplacementMap in="SourceGraphic" scale="22"/></filter>
<ellipse cx="330" cy="175" rx="35" ry="22" fill="#cae2d5" filter="url(#blob)"/>
<ellipse cx="360" cy="200" rx="22" ry="14" fill="#cae2d5" filter="url(#blob)"/>
<ellipse cx="455" cy="130" rx="25" ry="25" fill="#cae2d5" filter="url(#blob)"/>
<ellipse cx="90" cy="215" rx="30" ry="18" fill="#cae2d5" filter="url(#blob)"/>
<ellipse cx="220" cy="185" rx="25" ry="12" fill="#cae2d5" filter="url(#blob)"/>
<ellipse cx="150" cy="330" rx="20" ry="15" fill="#cae2d5" filter="url(#blob)"/>
<ellipse cx="480" cy="230" rx="15" ry="10" fill="#cae2d5" filter="url(#blob)"/>
<ellipse cx="250" cy="570" rx="30" ry="20" fill="#cae2d5" filter="url(#blob)"/>
<ellipse cx="300" cy="505" rx="20" ry="14" fill="#cae2d5" filter="url(#blob)"/>
<ellipse cx="430" cy="300" rx="18" ry="10" fill="#cae2d5" filter="url(#blob)"/>
<ellipse cx="560" cy="450" rx="20" ry="12" fill="#cae2d5" filter="url(#blob)"/>
<ellipse cx="600" cy="600" rx="25" ry="18" fill="#cae2d5" filter="url(#blob)"/>
<ellipse cx="520" cy="560" rx="18" ry="14" fill="#cae2d5" filter="url(#blob)"/>
<ellipse cx="400" cy="610" rx="30" ry="18" fill="#cae2d5" filter="url(#blob)"/>
<path d="M545,137 L578,132 L592,150 L582,178 L560,172 L545,160 Z" fill="#e6eaea" stroke="#9aa8a4" stroke-width="0.8" stroke-dasharray="1.5 2"/>
<path d="M560,101 Q563,118 567,135" stroke="#a9cfe0" stroke-width="9" fill="none"/>
<path d="M570,170 Q580,185 592,198 Q615,215 651,226" stroke="#a9cfe0" stroke-width="7" fill="none"/>
<path d="M95.0,111.0 Q135.4,132.3 200.0,140.0" stroke="#adc3bc" stroke-width="1.3" fill="none"/>
<path d="M95.0,111.0 Q119.9,135.7 135.0,162.0" stroke="#adc3bc" stroke-width="1.3" fill="none"/>
<path d="M200.0,140.0 Q157.3,161.5 135.0,162.0" stroke="#adc3bc" stroke-width="1.3" fill="none"/>
<path d="M200.0,140.0 Q267.1,145.4 312.0,150.0" stroke="#adc3bc" stroke-width="1.3" fill="none"/>
<path d="M312.0,150.0 Q355.2,156.5 398.0,182.0" stroke="#adc3bc" stroke-width="1.3" fill="none"/>
<path d="M398.0,182.0 Q452.1,158.9 542.0,145.0" stroke="#adc3bc" stroke-width="1.3" fill="none"/>
<path d="M542.0,145.0 Q558.1,134.5 568.0,155.0" stroke="#adc3bc" stroke-width="1.3" fill="none"/>
<path d="M398.0,182.0 Q405.6,197.4 392.0,232.0" stroke="#adc3bc" stroke-width="1.3" fill="none"/>
<path d="M392.0,232.0 Q376.9,263.0 381.0,327.0" stroke="#adc3bc" stroke-width="1.3" fill="none"/>
<path d="M568.0,155.0 Q567.9,210.1 532.0,248.0" stroke="#adc3bc" stroke-width="1.3" fill="none"/>
<path d="M532.0,248.0 Q549.5,325.2 540.0,394.0" stroke="#adc3bc" stroke-width="1.3" fill="none"/>
<path d="M540.0,394.0 Q485.2,383.3 464.0,385.0" stroke="#adc3bc" stroke-width="1.3" fill="none"/>
<path d="M464.0,385.0 Q422.4,342.2 381.0,327.0" stroke="#adc3bc" stroke-width="1.3" fill="none"/>
<path d="M381.0,327.0 Q329.8,308.8 246.0,300.0" stroke="#adc3bc" stroke-width="1.3" fill="none"/>
<path d="M246.0,300.0 Q170.6,302.4 120.0,282.0" stroke="#adc3bc" stroke-width="1.3" fill="none"/>
<path d="M120.0,282.0 Q114.0,237.4 135.0,162.0" stroke="#adc3bc" stroke-width="1.3" fill="none"/>
<path d="M120.0,282.0 Q83.8,328.9 51.0,372.0" stroke="#adc3bc" stroke-width="1.3" fill="none"/>
<path d="M246.0,300.0 Q222.3,349.9 210.0,401.0" stroke="#adc3bc" stroke-width="1.3" fill="none"/>
<path d="M210.0,401.0 Q169.2,412.3 151.0,457.0" stroke="#adc3bc" stroke-width="1.3" fill="none"/>
<path d="M151.0,457.0 Q123.2,431.0 69.0,424.0" stroke="#adc3bc" stroke-width="1.3" fill="none"/>
<path d="M69.0,424.0 Q70.1,387.5 51.0,372.0" stroke="#adc3bc" stroke-width="1.3" fill="none"/>
<path d="M151.0,457.0 Q182.9,513.7 181.0,542.0" stroke="#adc3bc" stroke-width="1.3" fill="none"/>
<path d="M181.0,542.0 Q210.2,580.0 221.0,599.0" stroke="#adc3bc" stroke-width="1.3" fill="none"/>
<path d="M221.0,599.0 Q264.4,613.3 302.0,611.0" stroke="#adc3bc" stroke-width="1.3" fill="none"/>
<path d="M302.0,611.0 Q345.9,619.6 417.0,630.0" stroke="#adc3bc" stroke-width="1.3" fill="none"/>
<path d="M331.0,530.0 Q360.3,492.7 366.0,477.0" stroke="#adc3bc" stroke-width="1.3" fill="none"/>
<path d="M331.0,530.0 Q389.2,594.0 417.0,630.0" stroke="#adc3bc" stroke-width="1.3" fill="none"/>
<path d="M417.0,630.0 Q412.2,599.6 414.0,579.0" stroke="#adc3bc" stroke-width="1.3" fill="none"/>
<path d="M417.0,630.0 Q448.7,636.9 484.0,652.0" stroke="#adc3bc" stroke-width="1.3" fill="none"/>
<path d="M478.0,529.0 Q557.3,505.4 601.0,490.0" stroke="#adc3bc" stroke-width="1.3" fill="none"/>
<path d="M540.0,394.0 Q553.5,427.4 601.0,490.0" stroke="#adc3bc" stroke-width="1.3" fill="none"/>
<path d="M319.0,434.0 Q357.9,398.2 381.0,327.0" stroke="#adc3bc" stroke-width="1.3" fill="none"/>
<path d="M319.0,434.0 Q324.9,481.7 331.0,530.0" stroke="#adc3bc" stroke-width="1.3" fill="none"/>
<path d="M348.0,353.0 Q366.3,348.9 381.0,327.0" stroke="#adc3bc" stroke-width="1.3" fill="none"/>
<path d="M253.0,194.0 Q234.0,188.9 235.0,176.0" stroke="#adc3bc" stroke-width="1.3" fill="none"/>
<path d="M253.0,194.0 Q251.5,251.4 246.0,300.0" stroke="#adc3bc" stroke-width="1.3" fill="none"/>
<path d="M253.0,194.0 Q314.0,176.1 398.0,182.0" stroke="#adc3bc" stroke-width="1.3" fill="none"/>
<path d="M221.0,599.0 Q200.5,635.4 191.0,641.0" stroke="#adc3bc" stroke-width="1.3" fill="none"/>
<path d="M181.0,542.0 Q180.5,595.0 191.0,641.0" stroke="#adc3bc" stroke-width="1.3" fill="none"/>
<path d="M366.0,477.0 Q408.0,416.7 464.0,385.0" stroke="#adc3bc" stroke-width="1.3" fill="none"/>
<path d="M478.0,529.0 Q465.4,601.8 484.0,652.0" stroke="#adc3bc" stroke-width="1.3" fill="none"/>
<path d="M628.0,521.0 Q624.5,501.0 601.0,490.0" stroke="#adc3bc" stroke-width="1.3" fill="none"/>
<path d="M646.0,554.0 Q568.6,547.8 478.0,529.0" stroke="#adc3bc" stroke-width="1.3" fill="none"/>
<path d="M51.0,210.0 Q107.4,202.5 135.0,162.0" stroke="#adc3bc" stroke-width="1.3" fill="none"/>
<path d="M532.0,248.0 Q588.2,291.6 651.0,300.0" stroke="#adc3bc" stroke-width="1.3" fill="none"/>
<path d="M540.0,394.0 Q612.1,410.3 651.0,420.0" stroke="#adc3bc" stroke-width="1.3" fill="none"/>
<path d="M120.0,282.0 Q99.3,290.7 51.0,300.0" stroke="#adc3bc" stroke-width="1.3" fill="none"/>
<path d="M398.0,182.0 Q429.5,132.4 470.0,101.0" stroke="#adc3bc" stroke-width="1.3" fill="none"/>
<path d="M312.0,150.0 Q319.5,113.3 300.0,101.0" stroke="#adc3bc" stroke-width="1.3" fill="none"/>
<path d="M484.0,652.0 Q552.0,637.0 651.0,600.0" stroke="#adc3bc" stroke-width="1.3" fill="none"/>
<path d="M484.0,652.0 Q531.9,658.4 560.0,666.0" stroke="#adc3bc" stroke-width="1.3" fill="none"/>
<path d="M302.0,611.0 Q303.1,622.4 280.0,666.0" stroke="#adc3bc" stroke-width="1.3" fill="none"/>
<path d="M568.0,155.0 Q600.8,144.9 651.0,150.0" stroke="#adc3bc" stroke-width="1.3" fill="none"/>
<path d="M51.0,372.0 Q48.1,414.1 51.0,480.0" stroke="#adc3bc" stroke-width="1.3" fill="none"/>
<path d="M191.0,641.0 Q140.0,647.7 120.0,666.0" stroke="#adc3bc" stroke-width="1.3" fill="none"/>
<path d="M392.0,232.0 Q476.4,257.4 532.0,248.0" stroke="#adc3bc" stroke-width="1.3" fill="none"/>
<path d="M210.0,401.0 Q273.4,416.7 319.0,434.0" stroke="#adc3bc" stroke-width="1.3" fill="none"/>
<path d="M302.0,611.0 Q307.6,587.0 331.0,530.0" stroke="#adc3bc" stroke-width="1.3" fill="none"/>
<path d="M235.0,176.0 Q218.4,166.2 200.0,140.0" stroke="#adc3bc" stroke-width="1.3" fill="none"/>
<path d="M464.0,385.0 Q454.0,446.6 478.0,529.0" stroke="#adc3bc" stroke-width="1.3" fill="none"/>
<path d="M554.0,550.3 Q568.7,537.0 586.3,520.4" stroke="#bcd0c9" stroke-width="1" fill="none"/>
<path d="M560.6,275.0 Q550.8,261.9 530.3,268.4" stroke="#bcd0c9" stroke-width="1" fill="none"/>
<path d="M462.2,640.0 Q486.7,650.2 505.5,646.4" stroke="#bcd0c9" stroke-width="1" fill="none"/>
<path d="M401.6,246.3 Q385.5,255.3 353.2,278.9" stroke="#bcd0c9" stroke-width="1" fill="none"/>
<path d="M107.9,154.1 Q119.4,164.4 145.3,160.1" stroke="#bcd0c9" stroke-width="1" fill="none"/>
<path d="M444.2,172.5 Q428.1,162.9 412.2,164.6" stroke="#bcd0c9" stroke-width="1" fill="none"/>
<path d="M150.6,204.9 Q134.2,212.7 115.8,238.5" stroke="#bcd0c9" stroke-width="1" fill="none"/>
<path d="M477.5,594.7 Q471.6,568.5 485.4,543.7" stroke="#bcd0c9" stroke-width="1" fill="none"/>
<path d="M89.1,532.6 Q95.1,558.2 111.0,575.8" stroke="#bcd0c9" stroke-width="1" fill="none"/>
<path d="M239.2,124.7 Q234.8,131.0 214.4,145.5" stroke="#bcd0c9" stroke-width="1" fill="none"/>
<path d="M352.9,411.4 Q366.2,407.7 375.6,403.7" stroke="#bcd0c9" stroke-width="1" fill="none"/>
<path d="M491.7,647.4 Q483.4,670.9 474.0,692.0" stroke="#bcd0c9" stroke-width="1" fill="none"/>
<path d="M89.2,561.3 Q102.5,568.7 123.1,556.3" stroke="#bcd0c9" stroke-width="1" fill="none"/>
<path d="M115.6,144.0 Q144.3,154.6 162.7,167.4" stroke="#bcd0c9" stroke-width="1" fill="none"/>
<path d="M423.8,112.2 Q412.6,95.1 400.7,82.4" stroke="#bcd0c9" stroke-width="1" fill="none"/>
<path d="M291.9,228.4 Q304.7,238.1 327.5,239.7" stroke="#bcd0c9" stroke-width="1" fill="none"/>
<path d="M541.4,509.9 Q524.9,513.7 513.0,518.0" stroke="#bcd0c9" stroke-width="1" fill="none"/>
<path d="M430.1,645.2 Q446.8,659.5 463.8,665.2" stroke="#bcd0c9" stroke-width="1" fill="none"/>
<path d="M585.3,541.4 Q571.1,530.6 550.1,505.4" stroke="#bcd0c9" stroke-width="1" fill="none"/>
<path d="M470.4,486.9 Q469.0,517.5 472.1,543.5" stroke="#bcd0c9" stroke-width="1" fill="none"/>
<path d="M545.9,645.5 Q552.3,641.0 566.1,644.1" stroke="#bcd0c9" stroke-width="1" fill="none"/>
<path d="M285.7,183.2 Q270.8,188.2 263.8,175.6" stroke="#bcd0c9" stroke-width="1" fill="none"/>
<path d="M496.4,362.2 Q523.1,374.7 541.7,398.8" stroke="#bcd0c9" stroke-width="1" fill="none"/>
<path d="M252.2,463.5 Q254.9,446.1 239.5,435.8" stroke="#bcd0c9" stroke-width="1" fill="none"/>
<path d="M203.5,578.6 Q211.0,600.0 230.5,617.4" stroke="#bcd0c9" stroke-width="1" fill="none"/>
<path d="M217.4,315.1 Q234.2,310.4 253.5,301.1" stroke="#bcd0c9" stroke-width="1" fill="none"/>
<path d="M219.4,199.5 Q201.6,219.0 196.2,220.0" stroke="#bcd0c9" stroke-width="1" fill="none"/>
<path d="M71.6,558.9 Q84.1,549.3 115.8,539.7" stroke="#bcd0c9" stroke-width="1" fill="none"/>
<path d="M74.6,444.4 Q60.2,431.2 65.5,416.3" stroke="#bcd0c9" stroke-width="1" fill="none"/>
<path d="M107.7,275.6 Q78.4,276.2 54.2,291.4" stroke="#bcd0c9" stroke-width="1" fill="none"/>
<path d="M526.0,565.6 Q509.0,561.7 504.4,561.6" stroke="#bcd0c9" stroke-width="1" fill="none"/>
<path d="M382.1,228.2 Q399.3,210.4 399.5,177.3" stroke="#bcd0c9" stroke-width="1" fill="none"/>
<path d="M61.6,429.9 Q91.0,448.6 110.6,457.0" stroke="#bcd0c9" stroke-width="1" fill="none"/>
<path d="M164.0,134.7 Q175.2,113.8 181.6,94.1" stroke="#bcd0c9" stroke-width="1" fill="none"/>
<path d="M531.1,292.0 Q524.9,311.4 526.9,325.8" stroke="#bcd0c9" stroke-width="1" fill="none"/>
<path d="M585.1,141.1 Q607.1,143.3 622.0,157.8" stroke="#bcd0c9" stroke-width="1" fill="none"/>
<path d="M212.9,134.2 Q235.9,141.9 251.6,143.4" stroke="#bcd0c9" stroke-width="1" fill="none"/>
<path d="M145.9,159.8 Q162.9,154.9 183.6,142.3" stroke="#bcd0c9" stroke-width="1" fill="none"/>
<path d="M487.7,397.4 Q505.4,400.7 534.5,422.5" stroke="#bcd0c9" stroke-width="1" fill="none"/>
<path d="M262.4,401.9 Q257.2,392.0 243.7,382.4" stroke="#bcd0c9" stroke-width="1" fill="none"/>
<path d="M148.2,581.8 Q161.6,549.8 167.8,529.1" stroke="#bcd0c9" stroke-width="1" fill="none"/>
<path d="M517.6,611.1 Q499.5,603.0 462.5,599.4" stroke="#bcd0c9" stroke-width="1" fill="none"/>
<path d="M616.1,630.3 Q615.9,622.7 621.7,610.6" stroke="#bcd0c9" stroke-width="1" fill="none"/>
<path d="M415.3,528.0 Q415.9,518.1 399.3,506.9" stroke="#bcd0c9" stroke-width="1" fill="none"/>
<path d="M580.0,217.9 Q606.6,222.4 622.2,217.3" stroke="#bcd0c9" stroke-width="1" fill="none"/>
<path d="M580.7,305.7 Q590.0,315.5 612.1,323.7" stroke="#bcd0c9" stroke-width="1" fill="none"/>
<path d="M540.0,305.7 Q545.6,315.0 554.3,321.1" stroke="#bcd0c9" stroke-width="1" fill="none"/>
<path d="M66.8,477.0 Q78.3,489.2 72.7,500.5" stroke="#bcd0c9" stroke-width="1" fill="none"/>
<path d="M588.0,391.4 Q597.1,404.5 609.3,412.0" stroke="#bcd0c9" stroke-width="1" fill="none"/>
<path d="M513.5,525.5 Q503.3,510.9 495.9,501.1" stroke="#bcd0c9" stroke-width="1" fill="none"/>
<path d="M344.7,251.0 Q316.8,252.9 307.5,242.0" stroke="#bcd0c9" stroke-width="1" fill="none"/>
<path d="M402.9,554.6 Q410.7,527.6 398.7,505.5" stroke="#bcd0c9" stroke-width="1" fill="none"/>
<path d="M287.2,103.1 Q277.6,94.5 265.0,66.0" stroke="#bcd0c9" stroke-width="1" fill="none"/>
<path d="M169.2,229.4 Q166.2,194.4 163.9,177.2" stroke="#bcd0c9" stroke-width="1" fill="none"/>
<path d="M273.3,567.9 Q251.8,570.5 234.8,567.9" stroke="#bcd0c9" stroke-width="1" fill="none"/>
<path d="M410.1,492.6 Q424.2,468.8 443.3,455.1" stroke="#bcd0c9" stroke-width="1" fill="none"/>
<path d="M520.1,549.0 Q539.7,550.7 545.3,536.8" stroke="#bcd0c9" stroke-width="1" fill="none"/>
<path d="M97.3,275.0 Q95.3,260.7 80.1,255.8" stroke="#bcd0c9" stroke-width="1" fill="none"/>
<path d="M460.4,268.1 Q463.2,286.2 466.0,295.8" stroke="#bcd0c9" stroke-width="1" fill="none"/>
<path d="M181.7,488.8 Q167.4,502.5 158.3,528.4" stroke="#bcd0c9" stroke-width="1" fill="none"/>
<path d="M135.6,133.6 Q122.0,124.0 123.5,99.1" stroke="#bcd0c9" stroke-width="1" fill="none"/>
<path d="M443.9,113.0 Q439.3,91.3 437.0,69.7" stroke="#bcd0c9" stroke-width="1" fill="none"/>
<path d="M628.3,312.3 Q610.8,292.0 598.5,278.0" stroke="#bcd0c9" stroke-width="1" fill="none"/>
<path d="M504.0,460.2 Q478.9,471.4 464.9,471.1" stroke="#bcd0c9" stroke-width="1" fill="none"/>
<path d="M62.9,464.4 Q50.8,470.1 35.2,472.5" stroke="#bcd0c9" stroke-width="1" fill="none"/>
<path d="M103.1,377.9 Q112.8,396.8 129.5,422.7" stroke="#bcd0c9" stroke-width="1" fill="none"/>
<path d="M180.2,128.2 Q187.8,147.2 190.3,152.2" stroke="#bcd0c9" stroke-width="1" fill="none"/>
<path d="M183.6,164.1 Q169.7,166.7 159.6,158.9" stroke="#bcd0c9" stroke-width="1" fill="none"/>
<path d="M172.9,496.3 Q156.4,495.5 150.2,490.7" stroke="#bcd0c9" stroke-width="1" fill="none"/>
<path d="M108.8,216.1 Q85.8,207.1 62.0,191.6" stroke="#bcd0c9" stroke-width="1" fill="none"/>
<path d="M140,101 Q150,150 170,200 Q180,260 230,300 Q260,360 240,420" stroke="#8aa098" stroke-width="1.1" stroke-dasharray="1.5 3" fill="none"/>
<path d="M300,101 Q310,160 340,220 Q360,270 350,330" stroke="#8aa098" stroke-width="1.1" stroke-dasharray="1.5 3" fill="none"/>
<path d="M460,101 Q470,160 490,190 Q520,250 510,320 Q500,380 480,410" stroke="#8aa098" stroke-width="1.1" stroke-dasharray="1.5 3" fill="none"/>
<path d="M51,300 Q120,320 200,330 Q300,350 330,380" stroke="#8aa098" stroke-width="1.1" stroke-dasharray="1.5 3" fill="none"/>
<path d="M350,380 Q420,400 520,390 Q600,380 651,400" stroke="#8aa098" stroke-width="1.1" stroke-dasharray="1.5 3" fill="none"/>
<path d="M51,250 Q100,240 150,245" stroke="#8aa098" stroke-width="1.1" stroke-dasharray="1.5 3" fill="none"/>
<path d="M540,450 Q570,480 600,520 Q620,580 630,630" stroke="#8aa098" stroke-width="1.1" stroke-dasharray="1.5 3" fill="none"/>
<path d="M360,470 Q420,480 460,500" stroke="#8aa098" stroke-width="1.1" stroke-dasharray="1.5 3" fill="none"/>
<path d="M380,540 Q420,600 400,640" stroke="#8aa098" stroke-width="1.1" stroke-dasharray="1.5 3" fill="none"/>
<path d="M440,400 Q520,430 560,470 Q620,470 651,520" stroke="#8aa098" stroke-width="1.1" stroke-dasharray="1.5 3" fill="none"/>
<path d="M255,470 Q300,490 330,520 Q360,540 380,560" stroke="#8aa098" stroke-width="1.1" stroke-dasharray="1.5 3" fill="none"/>
<path d="M300,440 Q320,480 340,500 Q380,510 420,500" stroke="#8aa098" stroke-width="1.1" stroke-dasharray="1.5 3" fill="none"/>
<path d="M270,520 Q320,530 360,560 Q400,575 430,600" stroke="#8aa098" stroke-width="1.1" stroke-dasharray="1.5 3" fill="none"/>
<path d="M290,580 Q340,590 380,620 Q420,640 450,650" stroke="#8aa098" stroke-width="1.1" stroke-dasharray="1.5 3" fill="none"/>
<path d="M350,480 Q380,520 370,560 Q360,600 380,640" stroke="#8aa098" stroke-width="1.1" stroke-dasharray="1.5 3" fill="none"/>
<path d="M400,520 Q430,560 440,600" stroke="#8aa098" stroke-width="1.1" stroke-dasharray="1.5 3" fill="none"/>
<path d="M51,560 Q90,575 120,600" stroke="#8aa098" stroke-width="1.1" stroke-dasharray="1.5 3" fill="none"/>
<path d="M130,380 Q170,400 210,395 Q250,390 300,410" stroke="#8aa098" stroke-width="1.1" stroke-dasharray="1.5 3" fill="none"/>
<path d="M460,420 Q500,460 520,520 Q540,580 560,640" stroke="#8aa098" stroke-width="1.1" stroke-dasharray="1.5 3" fill="none"/>
<path d="M560,300 Q600,340 651,350" stroke="#8aa098" stroke-width="1.1" stroke-dasharray="1.5 3" fill="none"/>
<path d="M120,101 Q100,150 110,200 Q130,250 120,300" stroke="#8aa098" stroke-width="1.1" stroke-dasharray="1.5 3" fill="none"/>
<path d="M49.4,532.3 L54.1,534.2 L58.0,533.8 L60.7,532.9 L67.1,533.8 L69.9,531.9 L73.6,528.6 L76.4,527.8 L78.3,524.1 L79.2,520.5 L83.5,519.1 L85.3,517.2 L86.9,513.1 L89.6,510.8 L94.5,509.8 L96.5,507.7 L100.3,508.2 L105.4,506.1 L109.1,507.5 L113.3,506.3 L117.9,504.9 L121.2,504.1 L123.6,504.1 L127.5,503.1 L130.7,504.5 L135.0,501.8 L137.3,501.4 L144.0,501.1 L147.3,500.1 L151.2,500.2 L155.5,499.8 L158.3,498.3 L163.0,499.5 L167.7,497.0 L171.0,497.0 L177.1,493.3 L178.6,491.9 L180.6,489.2 L183.2,483.5 L185.6,480.4 L185.4,479.0 L186.5,473.6 L189.7,469.7 L192.3,471.0 L197.1,470.6 L201.8,469.1 L206.3,467.0 L210.8,463.7 L213.5,461.4" stroke="#202422" stroke-width="1.5" fill="none" stroke-linejoin="round"/>
<path d="M221.6,440.0 L221.5,444.7 L218.8,448.9 L222.1,449.1 L226.1,451.0 L228.6,452.7 L226.7,456.3 L222.1,457.4 L218.9,458.5 L216.2,459.7 L213.5,461.4" stroke="#202422" stroke-width="1.5" fill="none" stroke-linejoin="round"/>
<path d="M214.2,461.1 L216.9,462.7 L219.7,462.1 L225.3,464.3 L229.9,463.1 L232.5,463.9 L236.4,466.2 L237.2,467.2 L242.4,469.8 L244.0,473.9 L245.5,476.4 L247.2,477.6 L249.2,481.0 L250.9,483.3 L254.3,487.1 L255.0,491.7 L257.4,496.0 L258.5,497.2 L260.9,500.3 L263.3,504.3 L262.9,507.4 L265.3,512.5 L268.0,516.1 L268.8,518.2 L268.7,522.2 L270.3,527.7 L273.4,528.9 L274.5,535.3 L274.5,537.8 L277.1,539.4 L278.2,545.1 L280.6,548.1 L279.7,550.6 L282.6,554.4 L283.1,556.5 L285.5,559.8 L289.9,559.8 L291.0,562.6 L294.6,566.6 L295.2,570.2 L300.6,571.0 L300.3,574.9 L301.3,579.2 L301.7,584.5 L301.8,587.3 L306.2,589.4 L306.6,594.1 L309.5,594.9 L312.6,596.8 L315.3,600.1 L317.5,602.4 L320.2,603.2 L323.5,606.0 L326.9,608.5 L331.4,611.9 L332.8,615.1 L336.0,616.5 L338.4,620.8 L340.0,624.1 L342.2,628.0 L342.8,630.5 L345.9,634.2 L346.5,636.9 L346.7,641.5 L347.5,646.2 L347.6,649.7 L348.5,655.5 L351.5,658.7 L351.6,661.5 L354.6,666.0" stroke="#202422" stroke-width="1.5" fill="none" stroke-linejoin="round"/>
<path d="M222.5,439.1 L224.9,440.0 L228.6,439.0 L233.9,439.1 L235.4,437.4 L239.7,437.6 L244.3,437.2 L248.1,438.8 L249.7,439.3 L254.6,440.0 L260.5,441.1 L266.4,438.4 L269.9,436.7 L272.8,436.8 L274.8,433.8 L279.6,432.5 L284.8,432.1 L290.6,435.5 L293.1,431.6 L297.5,432.1 L301.1,430.7 L303.0,433.2 L306.7,436.6 L309.2,437.6 L316.1,436.1 L320.7,436.6 L321.5,439.4 L326.7,443.0 L327.3,445.4 L331.5,448.6 L336.7,450.0 L339.7,453.5 L342.0,456.3 L344.0,459.6 L346.4,462.1 L351.1,462.0 L355.4,463.6 L360.2,463.9 L363.8,462.1 L368.5,463.5 L372.4,465.7 L369.8,467.4 L367.4,472.3 L365.4,475.0 L369.0,478.7 L373.7,480.9 L377.3,482.8 L379.2,484.2 L381.4,486.5 L385.3,481.6 L386.4,478.4 L389.3,475.6 L391.1,474.0 L394.8,473.4 L397.2,476.5 L402.7,475.3 L404.7,478.5 L409.7,478.1 L412.4,481.5 L413.1,483.0 L416.8,488.7 L419.6,491.1 L421.0,496.4 L421.4,497.7 L424.8,500.9 L428.1,501.5 L434.4,501.8 L437.1,504.3 L441.9,501.0 L444.2,499.0 L447.3,500.0 L449.8,504.3 L452.7,509.6 L453.5,511.3 L451.2,514.6 L449.8,518.0 L450.0,521.3 L448.2,526.8 L449.1,530.4 L450.2,533.3 L448.0,537.9 L449.1,543.0 L449.3,545.3 L447.1,547.3 L444.2,551.0 L441.9,554.4 L440.4,558.6 L440.8,561.5 L443.0,566.1 L446.2,568.2 L447.3,571.9 L452.3,573.7 L455.6,572.9 L459.4,573.5 L461.2,578.0 L462.6,581.2 L463.6,585.0 L463.2,589.0 L469.2,588.1 L471.5,588.1 L476.3,585.1 L478.7,585.5 L482.3,582.8 L481.8,587.7 L481.6,590.2 L483.3,594.8 L482.5,597.7 L482.2,599.7 L482.8,604.8 L483.0,609.3 L481.3,611.6 L482.1,614.3 L483.2,617.5 L482.0,620.7 L484.1,626.2 L483.6,630.6 L485.8,631.8 L490.5,635.7 L492.1,637.6 L495.2,637.7 L499.7,641.5 L502.7,642.0 L505.7,645.7 L509.0,648.1 L512.8,648.5 L517.9,648.9 L520.0,651.0" stroke="#202422" stroke-width="1.5" fill="none" stroke-linejoin="round"/>
<line x1="158" y1="619" x2="549.7" y2="133" stroke="#f2b4b4" stroke-width="4.6" stroke-opacity="0.6"/>
<line x1="158" y1="619" x2="549.7" y2="133" stroke="#e07070" stroke-width="2.6" stroke-opacity="0.9"/>
</svg>
<div style="position:absolute;left:0;top:0;width:1866px;height:1075px;clip-path:polygon(51px 101px,651px 101px,651px 666px,51px 666px)">
<span id="c_mir_0" class="t" style="left:51.00px;top:98.22px;font-size:12.50px;line-height:12.50px;color:#2a2e2c;font-weight:400;font-family:'Liberation Sans', sans-serif;transform:scaleX(0.9764);text-shadow:0 0 2px #e8f2ee,0 0 2px #e8f2ee;">мир</span>
<div class="b" style="left:92.3px;top:108.0px;width:6px;height:6px;border-radius:50%;box-sizing:border-box;border:1.2px solid #3a3e3c;background:#fff"></div><span id="c_lutsk_0" class="t" style="left:100.30px;top:97.92px;font-size:12.50px;line-height:12.50px;color:#2a2e2c;font-weight:400;font-family:'Liberation Sans', sans-serif;transform:scaleX(1.0271);text-shadow:0 0 2px #e8f2ee,0 0 2px #e8f2ee;">Lutsk</span>
<span id="c_rivne_0" class="t" style="left:184.00px;top:130.42px;font-size:12.50px;line-height:12.50px;color:#2a2e2c;font-weight:400;font-family:'Liberation Sans', sans-serif;transform:scaleX(1.0435);text-shadow:0 0 2px #e8f2ee,0 0 2px #e8f2ee;">Рівне</span>
<span id="c_zvy_0" class="t" style="left:310.60px;top:135.42px;font-size:12.50px;line-height:12.50px;color:#2a2e2c;font-weight:400;font-family:'Liberation Sans', sans-serif;transform:scaleX(0.9680);text-shadow:0 0 2px #e8f2ee,0 0 2px #e8f2ee;">Звягель</span>
<div class="b" style="left:131.8px;top:158.8px;width:6px;height:6px;border-radius:50%;box-sizing:border-box;border:1.2px solid #3a3e3c;background:#fff"></div><span id="c_dubno_0" class="t" style="left:138.50px;top:149.42px;font-size:12.50px;line-height:12.50px;color:#2a2e2c;font-weight:400;font-family:'Liberation Sans', sans-serif;transform:scaleX(0.9228);text-shadow:0 0 2px #e8f2ee,0 0 2px #e8f2ee;">Dubno</span><span id="c_dubno_1" class="t" style="left:138.50px;top:161.22px;font-size:12.50px;line-height:12.50px;color:#2a2e2c;font-weight:400;font-family:'Liberation Sans', sans-serif;transform:scaleX(0.9404);text-shadow:0 0 2px #e8f2ee,0 0 2px #e8f2ee;">Дубно</span>
<span id="c_kyi_0" class="t" style="left:51.00px;top:149.42px;font-size:12.50px;line-height:12.50px;color:#2a2e2c;font-weight:400;font-family:'Liberation Sans', sans-serif;transform:scaleX(0.8858);text-shadow:0 0 2px #e8f2ee,0 0 2px #e8f2ee;">yi</span><span id="c_kyi_1" class="t" style="left:51.00px;top:161.22px;font-size:12.50px;line-height:12.50px;color:#2a2e2c;font-weight:400;font-family:'Liberation Sans', sans-serif;transform:scaleX(0.9260);text-shadow:0 0 2px #e8f2ee,0 0 2px #e8f2ee;">кий</span>
<div class="b" style="left:232.0px;top:172.8px;width:6px;height:6px;border-radius:50%;box-sizing:border-box;border:1.2px solid #3a3e3c;background:#fff"></div><span id="c_slav_0" class="t" style="left:186.50px;top:164.22px;font-size:12.50px;line-height:12.50px;color:#2a2e2c;font-weight:400;font-family:'Liberation Sans', sans-serif;transform:scaleX(1.0910);text-shadow:0 0 2px #e8f2ee,0 0 2px #e8f2ee;">Slavuta</span><span id="c_slav_1" class="t" style="left:186.50px;top:175.92px;font-size:12.50px;line-height:12.50px;color:#2a2e2c;font-weight:400;font-family:'Liberation Sans', sans-serif;transform:scaleX(0.9394);text-shadow:0 0 2px #e8f2ee,0 0 2px #e8f2ee;">Славута</span>
<div class="b" style="left:249.7px;top:190.6px;width:6px;height:6px;border-radius:50%;box-sizing:border-box;border:1.2px solid #3a3e3c;background:#fff"></div><span id="c_shep_0" class="t" style="left:257.00px;top:181.32px;font-size:12.50px;line-height:12.50px;color:#2a2e2c;font-weight:400;font-family:'Liberation Sans', sans-serif;transform:scaleX(0.9425);text-shadow:0 0 2px #e8f2ee,0 0 2px #e8f2ee;">Shepetivka</span><span id="c_shep_1" class="t" style="left:257.00px;top:193.02px;font-size:12.50px;line-height:12.50px;color:#2a2e2c;font-weight:400;font-family:'Liberation Sans', sans-serif;transform:scaleX(0.9788);text-shadow:0 0 2px #e8f2ee,0 0 2px #e8f2ee;">Шепетівка</span>
<div class="b" style="left:395.3px;top:178.8px;width:6px;height:6px;border-radius:50%;box-sizing:border-box;border:1.2px solid #3a3e3c;background:#fff"></div><span id="c_zhyt_0" class="t" style="left:403.40px;top:167.63px;font-size:13.66px;line-height:13.66px;color:#2a2e2c;font-weight:400;font-family:'Liberation Sans', sans-serif;transform:scaleX(1.0192);text-shadow:0 0 2px #e8f2ee,0 0 2px #e8f2ee;-webkit-text-stroke:0.45px #2a2e2c;">Zhytomyr</span><span id="c_zhyt_1" class="t" style="left:403.40px;top:180.03px;font-size:13.66px;line-height:13.66px;color:#2a2e2c;font-weight:400;font-family:'Liberation Sans', sans-serif;transform:scaleX(0.9907);text-shadow:0 0 2px #e8f2ee,0 0 2px #e8f2ee;-webkit-text-stroke:0.45px #2a2e2c;">Житомир</span>
<div class="b" style="left:388.6px;top:228.7px;width:6px;height:6px;border-radius:50%;box-sizing:border-box;border:1.2px solid #3a3e3c;background:#fff"></div><span id="c_berd_0" class="t" style="left:396.00px;top:218.82px;font-size:12.50px;line-height:12.50px;color:#2a2e2c;font-weight:400;font-family:'Liberation Sans', sans-serif;transform:scaleX(0.9291);text-shadow:0 0 2px #e8f2ee,0 0 2px #e8f2ee;">Berdychiv</span><span id="c_berd_1" class="t" style="left:396.00px;top:231.22px;font-size:12.50px;line-height:12.50px;color:#2a2e2c;font-weight:400;font-family:'Liberation Sans', sans-serif;transform:scaleX(0.9802);text-shadow:0 0 2px #e8f2ee,0 0 2px #e8f2ee;">Бердичів</span>
<div class="b" style="left:538.7px;top:142.0px;width:6px;height:6px;border-radius:50%;box-sizing:border-box;border:1.2px solid #3a3e3c;background:#fff"></div><span id="c_irp_0" class="t" style="left:515.60px;top:131.72px;font-size:12.50px;line-height:12.50px;color:#2a2e2c;font-weight:400;font-family:'Liberation Sans', sans-serif;transform:scaleX(0.9043);text-shadow:0 0 2px #e8f2ee,0 0 2px #e8f2ee;">Irpin</span>
<span id="c_irp2_0" class="t" style="left:505.90px;top:144.12px;font-size:12.50px;line-height:12.50px;color:#2a2e2c;font-weight:400;font-family:'Liberation Sans', sans-serif;transform:scaleX(0.9584);text-shadow:0 0 2px #e8f2ee,0 0 2px #e8f2ee;">Ірпінь</span>
<svg class="b" style="left:562.5px;top:149.7px" width="10" height="10"><circle cx="5" cy="5" r="3.8" fill="#fff" stroke="#222" stroke-width="1.5"/><circle cx="5" cy="5" r="1.7" fill="#222"/></svg><span id="c_kyiv_0" class="t" style="left:573.00px;top:137.46px;font-size:15.99px;line-height:15.99px;color:#2a2e2c;font-weight:400;font-family:'Liberation Sans', sans-serif;transform:scaleX(0.9902);text-shadow:0 0 2px #e8f2ee,0 0 2px #e8f2ee;-webkit-text-stroke:0.45px #2a2e2c;">Kyi</span><span id="c_kyiv_1" class="t" style="left:573.00px;top:153.86px;font-size:15.99px;line-height:15.99px;color:#2a2e2c;font-weight:400;font-family:'Liberation Sans', sans-serif;transform:scaleX(1.0261);text-shadow:0 0 2px #e8f2ee,0 0 2px #e8f2ee;-webkit-text-stroke:0.45px #2a2e2c;">Київ</span>
<div class="b" style="left:528.6px;top:244.8px;width:6px;height:6px;border-radius:50%;box-sizing:border-box;border:1.2px solid #3a3e3c;background:#fff"></div><span id="c_bila_0" class="t" style="left:536.30px;top:233.53px;font-size:13.66px;line-height:13.66px;color:#2a2e2c;font-weight:400;font-family:'Liberation Sans', sans-serif;transform:scaleX(0.9908);text-shadow:0 0 2px #e8f2ee,0 0 2px #e8f2ee;-webkit-text-stroke:0.45px #2a2e2c;">Bila Tserkva</span><span id="c_bila_1" class="t" style="left:536.30px;top:246.93px;font-size:13.66px;line-height:13.66px;color:#2a2e2c;font-weight:400;font-family:'Liberation Sans', sans-serif;transform:scaleX(0.9401);text-shadow:0 0 2px #e8f2ee,0 0 2px #e8f2ee;-webkit-text-stroke:0.45px #2a2e2c;">Біла Церква</span>
<div class="b" style="left:116.7px;top:279.0px;width:6px;height:6px;border-radius:50%;box-sizing:border-box;border:1.2px solid #3a3e3c;background:#fff"></div><span id="c_tern_0" class="t" style="left:124.40px;top:269.03px;font-size:13.66px;line-height:13.66px;color:#2a2e2c;font-weight:400;font-family:'Liberation Sans', sans-serif;transform:scaleX(1.0454);text-shadow:0 0 2px #e8f2ee,0 0 2px #e8f2ee;-webkit-text-stroke:0.45px #2a2e2c;">Ternopil</span><span id="c_tern_1" class="t" style="left:124.40px;top:281.43px;font-size:13.66px;line-height:13.66px;color:#2a2e2c;font-weight:400;font-family:'Liberation Sans', sans-serif;transform:scaleX(0.9776);text-shadow:0 0 2px #e8f2ee,0 0 2px #e8f2ee;-webkit-text-stroke:0.45px #2a2e2c;">Тернопіль</span>
<div class="b" style="left:243.0px;top:296.7px;width:6px;height:6px;border-radius:50%;box-sizing:border-box;border:1.2px solid #3a3e3c;background:#fff"></div><span id="c_khm_0" class="t" style="left:250.30px;top:286.43px;font-size:13.66px;line-height:13.66px;color:#2a2e2c;font-weight:400;font-family:'Liberation Sans', sans-serif;transform:scaleX(1.0192);text-shadow:0 0 2px #e8f2ee,0 0 2px #e8f2ee;-webkit-text-stroke:0.45px #2a2e2c;">Khmelnytskyi</span><span id="c_khm_1" class="t" style="left:250.30px;top:299.23px;font-size:13.66px;line-height:13.66px;color:#2a2e2c;font-weight:400;font-family:'Liberation Sans', sans-serif;transform:scaleX(0.9885);text-shadow:0 0 2px #e8f2ee,0 0 2px #e8f2ee;-webkit-text-stroke:0.45px #2a2e2c;">Хмельницький</span>
<div class="b" style="left:378.0px;top:323.5px;width:6px;height:6px;border-radius:50%;box-sizing:border-box;border:1.2px solid #3a3e3c;background:#fff"></div><span id="c_vin_0" class="t" style="left:385.60px;top:312.63px;font-size:13.66px;line-height:13.66px;color:#2a2e2c;font-weight:400;font-family:'Liberation Sans', sans-serif;transform:scaleX(0.9606);text-shadow:0 0 2px #e8f2ee,0 0 2px #e8f2ee;-webkit-text-stroke:0.45px #2a2e2c;">Vinnytsia</span><span id="c_vin_1" class="t" style="left:385.60px;top:325.03px;font-size:13.66px;line-height:13.66px;color:#2a2e2c;font-weight:400;font-family:'Liberation Sans', sans-serif;transform:scaleX(0.9785);text-shadow:0 0 2px #e8f2ee,0 0 2px #e8f2ee;-webkit-text-stroke:0.45px #2a2e2c;">Вінниця</span>
<div class="b" style="left:345.0px;top:350.3px;width:6px;height:6px;border-radius:50%;box-sizing:border-box;border:1.2px solid #3a3e3c;background:#fff"></div><span id="c_zhm_0" class="t" style="left:352.00px;top:341.02px;font-size:12.50px;line-height:12.50px;color:#2a2e2c;font-weight:400;font-family:'Liberation Sans', sans-serif;transform:scaleX(0.9435);text-shadow:0 0 2px #e8f2ee,0 0 2px #e8f2ee;">Zhmerynka</span><span id="c_zhm_1" class="t" style="left:352.00px;top:352.92px;font-size:12.50px;line-height:12.50px;color:#2a2e2c;font-weight:400;font-family:'Liberation Sans', sans-serif;transform:scaleX(0.9732);text-shadow:0 0 2px #e8f2ee,0 0 2px #e8f2ee;">Жмеринка</span>
<span id="ukra" class="t" style="left:609.30px;top:347.16px;font-size:21.08px;line-height:21.08px;color:#1e2220;font-weight:700;font-family:'Liberation Sans', sans-serif;transform:scaleX(0.8960);text-shadow:0 0 2px #e8f2ee;">Ukra</span>
<span id="c_ivf_0" class="t" style="left:51.00px;top:356.13px;font-size:13.66px;line-height:13.66px;color:#2a2e2c;font-weight:400;font-family:'Liberation Sans', sans-serif;transform:scaleX(0.9072);text-shadow:0 0 2px #e8f2ee,0 0 2px #e8f2ee;-webkit-text-stroke:0.45px #2a2e2c;">vano-Frankivsk</span><span id="c_ivf_1" class="t" style="left:51.00px;top:368.43px;font-size:13.66px;line-height:13.66px;color:#2a2e2c;font-weight:400;font-family:'Liberation Sans', sans-serif;transform:scaleX(0.9659);text-shadow:0 0 2px #e8f2ee,0 0 2px #e8f2ee;-webkit-text-stroke:0.45px #2a2e2c;">вано-Франківськ</span>
<div class="b" style="left:460.5px;top:381.6px;width:6px;height:6px;border-radius:50%;box-sizing:border-box;border:1.2px solid #3a3e3c;background:#fff"></div><span id="c_hai_0" class="t" style="left:467.70px;top:372.32px;font-size:12.50px;line-height:12.50px;color:#2a2e2c;font-weight:400;font-family:'Liberation Sans', sans-serif;transform:scaleX(1.0361);text-shadow:0 0 2px #e8f2ee,0 0 2px #e8f2ee;">Haisyn</span><span id="c_hai_1" class="t" style="left:467.70px;top:384.32px;font-size:12.50px;line-height:12.50px;color:#2a2e2c;font-weight:400;font-family:'Liberation Sans', sans-serif;transform:scaleX(0.9865);text-shadow:0 0 2px #e8f2ee,0 0 2px #e8f2ee;">Гайсин</span>
<div class="b" style="left:537.2px;top:391.2px;width:6px;height:6px;border-radius:50%;box-sizing:border-box;border:1.2px solid #3a3e3c;background:#fff"></div><span id="c_uman_0" class="t" style="left:545.50px;top:379.13px;font-size:13.66px;line-height:13.66px;color:#2a2e2c;font-weight:400;font-family:'Liberation Sans', sans-serif;transform:scaleX(1.0703);text-shadow:0 0 2px #e8f2ee,0 0 2px #e8f2ee;-webkit-text-stroke:0.45px #2a2e2c;">Uman</span><span id="c_uman_1" class="t" style="left:545.50px;top:392.13px;font-size:13.66px;line-height:13.66px;color:#2a2e2c;font-weight:400;font-family:'Liberation Sans', sans-serif;transform:scaleX(0.9823);text-shadow:0 0 2px #e8f2ee,0 0 2px #e8f2ee;-webkit-text-stroke:0.45px #2a2e2c;">Умань</span>
<div class="b" style="left:206.7px;top:398.3px;width:6px;height:6px;border-radius:50%;box-sizing:border-box;border:1.2px solid #3a3e3c;background:#fff"></div><span id="c_kam_0" class="t" style="left:214.30px;top:387.82px;font-size:12.50px;line-height:12.50px;color:#2a2e2c;font-weight:400;font-family:'Liberation Sans', sans-serif;transform:scaleX(0.9398);text-shadow:0 0 2px #e8f2ee,0 0 2px #e8f2ee;">Kam&#x27;yanets&#x27;-Podil&#x27;s&#x27;kyi</span><span id="c_kam_1" class="t" style="left:214.30px;top:400.22px;font-size:12.50px;line-height:12.50px;color:#2a2e2c;font-weight:400;font-family:'Liberation Sans', sans-serif;transform:scaleX(0.9821);text-shadow:0 0 2px #e8f2ee,0 0 2px #e8f2ee;">Кам&#x27;янець-Подільський</span>
<div class="b" style="left:66.0px;top:421.2px;width:6px;height:6px;border-radius:50%;box-sizing:border-box;border:1.2px solid #3a3e3c;background:#fff"></div><span id="c_kol_0" class="t" style="left:72.90px;top:410.82px;font-size:12.50px;line-height:12.50px;color:#2a2e2c;font-weight:400;font-family:'Liberation Sans', sans-serif;transform:scaleX(0.9583);text-shadow:0 0 2px #e8f2ee,0 0 2px #e8f2ee;">Kolomyya</span><span id="c_kol_1" class="t" style="left:72.90px;top:423.22px;font-size:12.50px;line-height:12.50px;color:#2a2e2c;font-weight:400;font-family:'Liberation Sans', sans-serif;transform:scaleX(0.9861);text-shadow:0 0 2px #e8f2ee,0 0 2px #e8f2ee;">Коломия</span>
<div class="b" style="left:316.3px;top:431.0px;width:6px;height:6px;border-radius:50%;box-sizing:border-box;border:1.2px solid #3a3e3c;background:#fff"></div><span id="c_moh_0" class="t" style="left:323.50px;top:420.72px;font-size:12.50px;line-height:12.50px;color:#2a2e2c;font-weight:400;font-family:'Liberation Sans', sans-serif;transform:scaleX(1.0135);text-shadow:0 0 2px #e8f2ee,0 0 2px #e8f2ee;">Mohyliv-Podil&#x27;s&#x27;kyi</span><span id="c_moh_1" class="t" style="left:323.50px;top:433.12px;font-size:12.50px;line-height:12.50px;color:#2a2e2c;font-weight:400;font-family:'Liberation Sans', sans-serif;transform:scaleX(0.9880);text-shadow:0 0 2px #e8f2ee,0 0 2px #e8f2ee;">Могилів-Подільський</span>
<div class="b" style="left:147.6px;top:453.8px;width:6px;height:6px;border-radius:50%;box-sizing:border-box;border:1.2px solid #3a3e3c;background:#fff"></div><span id="c_cher_0" class="t" style="left:155.60px;top:442.73px;font-size:13.66px;line-height:13.66px;color:#2a2e2c;font-weight:400;font-family:'Liberation Sans', sans-serif;transform:scaleX(0.9486);text-shadow:0 0 2px #e8f2ee,0 0 2px #e8f2ee;-webkit-text-stroke:0.45px #2a2e2c;">Chernivtsi</span><span id="c_cher_1" class="t" style="left:155.60px;top:455.13px;font-size:13.66px;line-height:13.66px;color:#2a2e2c;font-weight:400;font-family:'Liberation Sans', sans-serif;transform:scaleX(1.0380);text-shadow:0 0 2px #e8f2ee,0 0 2px #e8f2ee;-webkit-text-stroke:0.45px #2a2e2c;">Чернівці</span>
<div class="b" style="left:362.9px;top:473.5px;width:6px;height:6px;border-radius:50%;box-sizing:border-box;border:1.2px solid #3a3e3c;background:#fff"></div><span id="c_sor_0" class="t" style="left:325.60px;top:469.12px;font-size:12.50px;line-height:12.50px;color:#2a2e2c;font-weight:400;font-family:'Liberation Sans', sans-serif;transform:scaleX(0.9089);text-shadow:0 0 2px #e8f2ee,0 0 2px #e8f2ee;">Soroca</span>
<div class="b" style="left:598.3px;top:487.3px;width:6px;height:6px;border-radius:50%;box-sizing:border-box;border:1.2px solid #3a3e3c;background:#fff"></div><span id="c_perv_0" class="t" style="left:606.30px;top:476.62px;font-size:12.50px;line-height:12.50px;color:#2a2e2c;font-weight:400;font-family:'Liberation Sans', sans-serif;transform:scaleX(0.8994);text-shadow:0 0 2px #e8f2ee,0 0 2px #e8f2ee;">Pervoma</span><span id="c_perv_1" class="t" style="left:606.30px;top:488.62px;font-size:12.50px;line-height:12.50px;color:#2a2e2c;font-weight:400;font-family:'Liberation Sans', sans-serif;transform:scaleX(1.0014);text-shadow:0 0 2px #e8f2ee,0 0 2px #e8f2ee;">Первом</span>
<div class="b" style="left:624.5px;top:517.7px;width:6px;height:6px;border-radius:50%;box-sizing:border-box;border:1.2px solid #3a3e3c;background:#fff"></div><span id="c_pivd_0" class="t" style="left:632.00px;top:507.32px;font-size:12.50px;line-height:12.50px;color:#2a2e2c;font-weight:400;font-family:'Liberation Sans', sans-serif;transform:scaleX(0.7810);text-shadow:0 0 2px #e8f2ee,0 0 2px #e8f2ee;">Pivd</span><span id="c_pivd_1" class="t" style="left:632.00px;top:519.02px;font-size:12.50px;line-height:12.50px;color:#2a2e2c;font-weight:400;font-family:'Liberation Sans', sans-serif;transform:scaleX(0.7433);text-shadow:0 0 2px #e8f2ee,0 0 2px #e8f2ee;">Півд</span>
<div class="b" style="left:474.6px;top:525.5px;width:6px;height:6px;border-radius:50%;box-sizing:border-box;border:1.2px solid #3a3e3c;background:#fff"></div><span id="c_pod_0" class="t" style="left:481.90px;top:516.12px;font-size:12.50px;line-height:12.50px;color:#2a2e2c;font-weight:400;font-family:'Liberation Sans', sans-serif;transform:scaleX(0.9926);text-shadow:0 0 2px #e8f2ee,0 0 2px #e8f2ee;">Podilsk</span><span id="c_pod_1" class="t" style="left:481.90px;top:528.52px;font-size:12.50px;line-height:12.50px;color:#2a2e2c;font-weight:400;font-family:'Liberation Sans', sans-serif;transform:scaleX(0.9778);text-shadow:0 0 2px #e8f2ee,0 0 2px #e8f2ee;">Подільськ</span>
<div class="b" style="left:327.6px;top:526.6px;width:6px;height:6px;border-radius:50%;box-sizing:border-box;border:1.2px solid #3a3e3c;background:#fff"></div><span id="c_balt_0" class="t" style="left:335.20px;top:522.23px;font-size:13.66px;line-height:13.66px;color:#2a2e2c;font-weight:400;font-family:'Liberation Sans', sans-serif;transform:scaleX(0.9707);text-shadow:0 0 2px #e8f2ee,0 0 2px #e8f2ee;-webkit-text-stroke:0.45px #2a2e2c;">Bălți</span>
<span id="moldova" class="t" style="left:339.80px;top:540.10px;font-size:22.67px;line-height:22.67px;color:#1a1e1c;font-weight:700;font-family:'Liberation Sans', sans-serif;transform:scaleX(0.9109);text-shadow:0 0 2px #e8f2ee;">Moldova</span>
<div class="b" style="left:177.7px;top:539.0px;width:6px;height:6px;border-radius:50%;box-sizing:border-box;border:1.2px solid #3a3e3c;background:#fff"></div><span id="c_suc_0" class="t" style="left:185.00px;top:535.33px;font-size:13.66px;line-height:13.66px;color:#2a2e2c;font-weight:400;font-family:'Liberation Sans', sans-serif;transform:scaleX(0.9293);text-shadow:0 0 2px #e8f2ee,0 0 2px #e8f2ee;-webkit-text-stroke:0.45px #2a2e2c;">Suceava</span>
<div class="b" style="left:643.0px;top:551.0px;width:6px;height:6px;border-radius:50%;box-sizing:border-box;border:1.2px solid #3a3e3c;background:#fff"></div><span id="c_vv_0" class="t" style="left:649.00px;top:540.42px;font-size:12.50px;line-height:12.50px;color:#2a2e2c;font-weight:400;font-family:'Liberation Sans', sans-serif;transform:scaleX(0.7191);text-shadow:0 0 2px #e8f2ee,0 0 2px #e8f2ee;">V</span><span id="c_vv_1" class="t" style="left:649.00px;top:552.42px;font-size:12.50px;line-height:12.50px;color:#2a2e2c;font-weight:400;font-family:'Liberation Sans', sans-serif;transform:scaleX(0.7191);text-shadow:0 0 2px #e8f2ee,0 0 2px #e8f2ee;">В</span>
<div class="b" style="left:411.0px;top:576.0px;width:6px;height:6px;border-radius:50%;box-sizing:border-box;border:1.2px solid #3a3e3c;background:#fff"></div><span id="c_orh_0" class="t" style="left:417.50px;top:572.72px;font-size:12.50px;line-height:12.50px;color:#2a2e2c;font-weight:400;font-family:'Liberation Sans', sans-serif;transform:scaleX(0.8895);text-shadow:0 0 2px #e8f2ee,0 0 2px #e8f2ee;">Orhei</span>
<div class="b" style="left:218.3px;top:596.2px;width:6px;height:6px;border-radius:50%;box-sizing:border-box;border:1.2px solid #3a3e3c;background:#fff"></div><span id="c_pas_0" class="t" style="left:225.60px;top:592.82px;font-size:12.50px;line-height:12.50px;color:#2a2e2c;font-weight:400;font-family:'Liberation Sans', sans-serif;transform:scaleX(0.9531);text-shadow:0 0 2px #e8f2ee,0 0 2px #e8f2ee;">Pașcani</span>
<div class="b" style="left:299.3px;top:607.5px;width:6px;height:6px;border-radius:50%;box-sizing:border-box;border:1.2px solid #3a3e3c;background:#fff"></div><span id="c_iasi_0" class="t" style="left:306.90px;top:602.26px;font-size:15.99px;line-height:15.99px;color:#2a2e2c;font-weight:400;font-family:'Liberation Sans', sans-serif;transform:scaleX(1.0372);text-shadow:0 0 2px #e8f2ee,0 0 2px #e8f2ee;-webkit-text-stroke:0.45px #2a2e2c;">Iași</span>
<span id="c_ta2_0" class="t" style="left:51.00px;top:605.42px;font-size:12.50px;line-height:12.50px;color:#2a2e2c;font-weight:400;font-family:'Liberation Sans', sans-serif;transform:scaleX(0.9581);text-shadow:0 0 2px #e8f2ee,0 0 2px #e8f2ee;">ța</span>
<svg class="b" style="left:411.5px;top:625.0px" width="10" height="10"><circle cx="5" cy="5" r="3.8" fill="#fff" stroke="#222" stroke-width="1.5"/><circle cx="5" cy="5" r="1.7" fill="#222"/></svg><span id="c_chis_0" class="t" style="left:421.80px;top:621.76px;font-size:15.99px;line-height:15.99px;color:#2a2e2c;font-weight:400;font-family:'Liberation Sans', sans-serif;transform:scaleX(0.9935);text-shadow:0 0 2px #e8f2ee,0 0 2px #e8f2ee;-webkit-text-stroke:0.45px #2a2e2c;">Chișinău</span>
<div class="b" style="left:188.0px;top:638.0px;width:6px;height:6px;border-radius:50%;box-sizing:border-box;border:1.2px solid #3a3e3c;background:#fff"></div><span id="c_pn_0" class="t" style="left:195.50px;top:633.63px;font-size:13.66px;line-height:13.66px;color:#2a2e2c;font-weight:400;font-family:'Liberation Sans', sans-serif;transform:scaleX(0.9535);text-shadow:0 0 2px #e8f2ee,0 0 2px #e8f2ee;-webkit-text-stroke:0.45px #2a2e2c;">Piatra Neamț</span>
<div class="b" style="left:481.3px;top:649.2px;width:6px;height:6px;border-radius:50%;box-sizing:border-box;border:1.2px solid #3a3e3c;background:#fff"></div><span id="c_tir_0" class="t" style="left:432.40px;top:645.23px;font-size:13.66px;line-height:13.66px;color:#2a2e2c;font-weight:400;font-family:'Liberation Sans', sans-serif;transform:scaleX(0.9901);text-shadow:0 0 2px #e8f2ee,0 0 2px #e8f2ee;-webkit-text-stroke:0.45px #2a2e2c;">Tiraspol</span>
</div>
<div class="b" style="left:63.4px;top:113.9px;width:351px;height:23.4px;background:#fddcb4;box-sizing:border-box;border:1px dashed #c8b8a0"></div>
<span id="idbox" class="t" style="left:143.80px;top:115.17px;font-size:20.46px;line-height:20.46px;color:#111;font-weight:700;font-family:'Liberation Serif', serif;transform:scaleX(1.0236);">Id: User-defined map</span>
<svg class="b" style="left:535px;top:108px" width="34" height="28"><path d="M2 3 L33 13" stroke="#222" stroke-width="1.4"/><path d="M5 6 L30 6" stroke="#222" stroke-width="2"/><path d="M8 2 L12 9 M22 2 L26 9" stroke="#222" stroke-width="1.2"/><rect x="14" y="6" width="6" height="21" fill="#222"/><path d="M15 9 L19 13 L15 17 L19 21 L15 25" stroke="#8a9a94" stroke-width="1" fill="none"/></svg>
<svg class="b" style="left:139px;top:611px" width="27" height="26"><g stroke="#e01818" stroke-width="2.3" fill="none" stroke-linecap="round"><path d="M8.5 4.5 A7 7 0 0 0 8.5 14.5 M18.5 4.5 A7 7 0 0 1 18.5 14.5"/><path d="M4.5 1.8 A11 11 0 0 0 4.5 17.2 M22.5 1.8 A11 11 0 0 1 22.5 17.2"/></g><circle cx="13.5" cy="9.5" r="2.6" fill="#e01818"/><path d="M13.5 10 L10 24.5 L17 24.5 Z" fill="#e01818"/></svg>
<div class="b" style="left:594.3px;top:112.9px;width:45.2px;height:44.5px;background:#fff;border-radius:4px;box-shadow:0 0 0 2px rgba(0,0,0,0.22)"></div>
<svg class="b" style="left:600px;top:118px" width="34" height="34"><g transform="rotate(-38 17 17)"><rect x="2.5" y="9.5" width="29" height="15" rx="7.5" stroke="#111" stroke-width="2.6" fill="#fff"/><rect x="9" y="11.5" width="20" height="11" rx="5.5" fill="#111"/><circle cx="12.5" cy="17" r="4" fill="#fff" stroke="#111" stroke-width="1.4"/></g></svg>
<div class="b" style="left:594.3px;top:170.8px;width:45.2px;height:44.2px;background:#fff;border-radius:4px;box-shadow:0 0 0 2px rgba(0,0,0,0.22)"></div>
<svg class="b" style="left:602px;top:178px" width="30" height="30"><path d="M15 14 L28 20 L15 26.5 L2 20 Z" fill="#8a8a8a"/><path d="M15 9.5 L28 15.5 L15 22 L2 15.5 Z" fill="#a8a8a8" stroke="#f4f4f4" stroke-width="0.9"/><path d="M15 3.5 L28 9.5 L15 16 L2 9.5 Z" fill="#cfcfcf" stroke="#f4f4f4" stroke-width="0.9"/></svg>
<div class="b" style="left:608.3px;top:228.7px;width:31.2px;height:61px;background:#fff;border-radius:4px;box-shadow:0 0 0 2px rgba(0,0,0,0.22)"></div>
<div class="b" style="left:608.3px;top:259.3px;width:31.2px;height:1.0px;background:#ccc;border-radius:0px;"></div>
<div class="b" style="left:616.5px;top:242.3px;width:15.0px;height:3.5px;background:#111;border-radius:0px;"></div>
<div class="b" style="left:622.3px;top:236.5px;width:3.5px;height:15.0px;background:#111;border-radius:0px;"></div>
<div class="b" style="left:617.5px;top:273.0px;width:13.5px;height:3.2px;background:#111;border-radius:0px;"></div>
<div class="b" style="left:496.0px;top:649.0px;width:155.0px;height:17.0px;background:rgba(255,255,255,0.82);border-radius:0px;"></div>
<div class="b" style="left:501.0px;top:653.0px;width:12.5px;height:4.5px;background:#3b6fc0;border-radius:0px;"></div>
<div class="b" style="left:501.0px;top:657.5px;width:12.5px;height:4.5px;background:#f0c020;border-radius:0px;"></div>
<span id="leaf" class="t" style="left:516.50px;top:651.72px;font-size:12.50px;line-height:12.50px;color:#2a7fc0;font-weight:400;font-family:'Liberation Sans', sans-serif;transform:scaleX(0.9725);">Leaflet</span>
<span id="gmaps" class="t" style="left:556.00px;top:651.72px;font-size:12.50px;line-height:12.50px;color:#333;font-weight:400;font-family:'Liberation Sans', sans-serif;transform:scaleX(0.9387);overflow:hidden;">| © Google Maps</span>
<div class="b" style="left:51.0px;top:656.0px;width:10.0px;height:10.0px;background:#f00;border-radius:0px;"></div>
<div class="b" style="left:641.0px;top:656.0px;width:10.0px;height:10.0px;background:#00f;border-radius:0px;"></div>
<div class="b" style="left:66.0px;top:681.0px;width:570.0px;height:22.0px;background:#1f2a29;border-radius:0px;"></div>
<div class="b" style="left:553.0px;top:681.0px;width:83.0px;height:22.0px;background:#2b8ae8;border-radius:0px;"></div>
<svg class="b" style="left:75px;top:685px" width="14" height="15"><path d="M1 1 L12 7.5 L1 14 Z" fill="#d8dadc"/></svg>
<span id="f_freq" class="t" style="left:81.50px;top:685.93px;font-size:13.66px;line-height:13.66px;color:#f0f0f0;font-weight:400;font-family:'Liberation Sans', sans-serif;transform:scaleX(0.9084);">93.30 MHz</span>
<span id="f_pi" class="t" style="left:178.70px;top:685.93px;font-size:13.66px;line-height:13.66px;color:#f0f0f0;font-weight:400;font-family:'Liberation Sans', sans-serif;transform:scaleX(0.8633);">E24D</span>
<span id="f_stn" class="t" style="left:239.00px;top:685.93px;font-size:13.66px;line-height:13.66px;color:#f0f0f0;font-weight:400;font-family:'Liberation Sans', sans-serif;transform:scaleX(0.8632);">R.Trinitas</span>
<span id="f_city" class="t" style="left:361.50px;top:685.93px;font-size:13.66px;line-height:13.66px;color:#f0f0f0;font-weight:400;font-family:'Liberation Sans', sans-serif;transform:scaleX(0.8584);">Ceahlau [ROU]</span>
<span id="f_km" class="t" style="left:500.00px;top:685.93px;font-size:13.66px;line-height:13.66px;color:#f0f0f0;font-weight:400;font-family:'Liberation Sans', sans-serif;transform:scaleX(0.9264);">515 km</span>
<span id="f_v" class="t" style="left:557.50px;top:685.93px;font-size:13.66px;line-height:13.66px;color:#f0f0f0;font-weight:400;font-family:'Liberation Sans', sans-serif;transform:scaleX(1.0252);">v</span>
<span id="f_kw" class="t" style="left:586.50px;top:685.93px;font-size:13.66px;line-height:13.66px;color:#f0f0f0;font-weight:400;font-family:'Liberation Sans', sans-serif;transform:scaleX(0.9083);">3.00 kW</span>
</body></html>
